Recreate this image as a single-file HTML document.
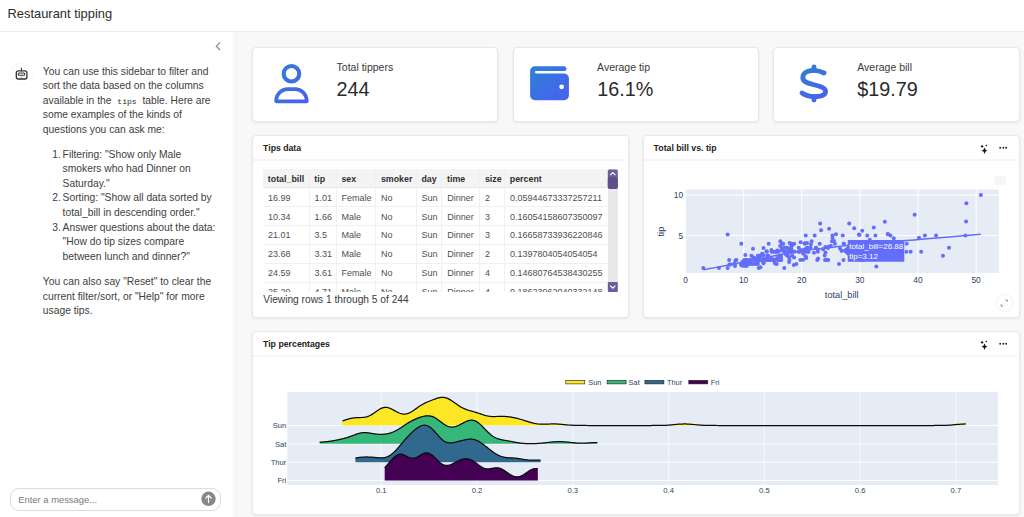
<!DOCTYPE html>
<html><head><meta charset="utf-8"><title>Restaurant tipping</title>
<style>
html,body{margin:0;padding:0}
body{width:1024px;height:517px;overflow:hidden;position:relative;background:#f8f8f8;font-family:'Liberation Sans', sans-serif}
.t{position:absolute;white-space:nowrap}
</style></head><body>
<div style="position:absolute;left:0px;top:0px;width:1024px;height:31px;background:#fff;border-bottom:1px solid #ededed"></div><div style="position:absolute;left:0px;top:32px;width:232px;height:485px;background:#fff"></div><div style="position:absolute;left:232px;top:32px;width:6px;height:485px;background:linear-gradient(to right,#fefefe,#f5f5f5 60%,#f8f8f8)"></div><div class="t" style="left:7.50px;top:8.08px;font-size:12.9px;line-height:12.9px;color:#2b2b2b;font-weight:normal;">Restaurant tipping</div><svg style="position:absolute;left:212px;top:40px" width="14" height="12" viewBox="0 0 14 12"><path d="M8 2.4 L4.3 6.2 L8 10" fill="none" stroke="#8c8c8c" stroke-width="1.25"/></svg><svg style="position:absolute;left:10px;top:62px" width="24" height="24" viewBox="0 0 24 24">
<circle cx="11.5" cy="12" r="11" fill="none" stroke="#f8f8f8" stroke-width="1"/>
<line x1="11.4" y1="6" x2="11.4" y2="8.7" stroke="#333" stroke-width="1.1" stroke-linecap="round"/>
<rect x="6.3" y="8.8" width="10.6" height="8.2" rx="2" fill="none" stroke="#333" stroke-width="1.3"/>
<rect x="8.2" y="11" width="6.6" height="2.3" rx="1.15" fill="none" stroke="#333" stroke-width="1.1"/>
<line x1="10.4" y1="15.2" x2="12.4" y2="15.2" stroke="#777" stroke-width="0.6"/>
</svg><div class="t" style="left:42.80px;top:66.58px;font-size:10.3px;line-height:10.3px;color:#404040;font-weight:normal;">You can use this sidebar to filter and</div><div class="t" style="left:42.80px;top:81.18px;font-size:10.3px;line-height:10.3px;color:#404040;font-weight:normal;">sort the data based on the columns</div><div class="t" style="left:42.80px;top:95.78px;font-size:10.3px;line-height:10.3px;color:#404040;font-weight:normal;">available in the <span style="font-family:'Liberation Mono',monospace;font-size:8px;padding:1px 3px;color:#2a2a2a">tips</span> table. Here are</div><div class="t" style="left:42.80px;top:110.38px;font-size:10.3px;line-height:10.3px;color:#404040;font-weight:normal;">some examples of the kinds of</div><div class="t" style="left:42.80px;top:124.68px;font-size:10.3px;line-height:10.3px;color:#404040;font-weight:normal;">questions you can ask me:</div><div class="t" style="left:62.60px;top:149.98px;font-size:10.3px;line-height:10.3px;color:#404040;font-weight:normal;">Filtering: &quot;Show only Male</div><div class="t" style="left:62.60px;top:164.28px;font-size:10.3px;line-height:10.3px;color:#404040;font-weight:normal;">smokers who had Dinner on</div><div class="t" style="left:62.60px;top:178.78px;font-size:10.3px;line-height:10.3px;color:#404040;font-weight:normal;">Saturday.&quot;</div><div class="t" style="left:62.60px;top:193.38px;font-size:10.3px;line-height:10.3px;color:#404040;font-weight:normal;">Sorting: &quot;Show all data sorted by</div><div class="t" style="left:62.60px;top:207.98px;font-size:10.3px;line-height:10.3px;color:#404040;font-weight:normal;">total_bill in descending order.&quot;</div><div class="t" style="left:62.60px;top:222.58px;font-size:10.3px;line-height:10.3px;color:#404040;font-weight:normal;">Answer questions about the data:</div><div class="t" style="left:62.60px;top:237.18px;font-size:10.3px;line-height:10.3px;color:#404040;font-weight:normal;">&quot;How do tip sizes compare</div><div class="t" style="left:62.60px;top:251.98px;font-size:10.3px;line-height:10.3px;color:#404040;font-weight:normal;">between lunch and dinner?&quot;</div><div class="t" style="left:42.80px;top:276.98px;font-size:10.3px;line-height:10.3px;color:#404040;font-weight:normal;">You can also say &quot;Reset&quot; to clear the</div><div class="t" style="left:42.80px;top:291.58px;font-size:10.3px;line-height:10.3px;color:#404040;font-weight:normal;">current filter/sort, or &quot;Help&quot; for more</div><div class="t" style="left:42.80px;top:306.08px;font-size:10.3px;line-height:10.3px;color:#404040;font-weight:normal;">usage tips.</div><div class="t" style="left:52.30px;top:149.98px;font-size:10.3px;line-height:10.3px;color:#404040;font-weight:normal;">1.</div><div class="t" style="left:52.30px;top:193.38px;font-size:10.3px;line-height:10.3px;color:#404040;font-weight:normal;">2.</div><div class="t" style="left:52.30px;top:222.58px;font-size:10.3px;line-height:10.3px;color:#404040;font-weight:normal;">3.</div><div style="position:absolute;left:10px;top:488px;width:209px;height:21px;background:#fff;border:1px solid #dcdcdc;border-radius:9px"></div><div class="t" style="left:18.30px;top:495.04px;font-size:9.4px;line-height:9.4px;color:#7a7a7a;font-weight:normal;">Enter a message...</div><svg style="position:absolute;left:200px;top:491px" width="17" height="17" viewBox="0 0 17 17"><circle cx="8.5" cy="7.8" r="7.2" fill="#878787"/><path d="M8.5 11.6 V4.4 M5.9 7 L8.5 4.4 L11.1 7" fill="none" stroke="#fff" stroke-width="1.2" stroke-linecap="round" stroke-linejoin="round"/></svg><div style="position:absolute;left:252px;top:46.5px;width:244px;height:73.6px;background:#fff;border:1px solid #e8e8e8;border-radius:4px;box-shadow:0 1px 3px rgba(0,0,0,0.08)"></div><div style="position:absolute;left:512.5px;top:46.5px;width:244px;height:73.6px;background:#fff;border:1px solid #e8e8e8;border-radius:4px;box-shadow:0 1px 3px rgba(0,0,0,0.08)"></div><div style="position:absolute;left:773px;top:46.5px;width:245px;height:73.6px;background:#fff;border:1px solid #e8e8e8;border-radius:4px;box-shadow:0 1px 3px rgba(0,0,0,0.08)"></div><div style="position:absolute;left:252px;top:134.8px;width:375px;height:181.4px;background:#fff;border:1px solid #e8e8e8;border-radius:4px;box-shadow:0 1px 3px rgba(0,0,0,0.08)"></div><div style="position:absolute;left:642.8px;top:134.8px;width:375px;height:181.4px;background:#fff;border:1px solid #e8e8e8;border-radius:4px;box-shadow:0 1px 3px rgba(0,0,0,0.08)"></div><div style="position:absolute;left:252px;top:330.5px;width:766px;height:182px;background:#fff;border:1px solid #e8e8e8;border-radius:4px;box-shadow:0 1px 3px rgba(0,0,0,0.08)"></div><div class="t" style="left:336.60px;top:62.01px;font-size:10.5px;line-height:10.5px;color:#3a3a3a;font-weight:normal;">Total tippers</div><div class="t" style="left:336.40px;top:79.84px;font-size:19.8px;line-height:19.8px;color:#2a2a2a;font-weight:normal;">244</div><div class="t" style="left:597.10px;top:62.01px;font-size:10.5px;line-height:10.5px;color:#3a3a3a;font-weight:normal;">Average tip</div><div class="t" style="left:597.30px;top:79.84px;font-size:19.8px;line-height:19.8px;color:#2a2a2a;font-weight:normal;">16.1%</div><div class="t" style="left:857.30px;top:62.01px;font-size:10.5px;line-height:10.5px;color:#3a3a3a;font-weight:normal;">Average bill</div><div class="t" style="left:857.30px;top:79.84px;font-size:19.8px;line-height:19.8px;color:#2a2a2a;font-weight:normal;">$19.79</div><svg style="position:absolute;left:0;top:0" width="1024" height="130" viewBox="0 0 1024 130">
<defs>
<linearGradient id="g1" x1="0" y1="0" x2="1" y2="1"><stop offset="0" stop-color="#2f80d0"/><stop offset="1" stop-color="#4d5cf2"/></linearGradient>
<linearGradient id="g2" x1="0" y1="0" x2="1" y2="1"><stop offset="0" stop-color="#2b82d3"/><stop offset="1" stop-color="#4b5ff3"/></linearGradient>
</defs>
<g transform="translate(274.3,64) scale(0.0766)" fill="url(#g1)">
<path d="M299 128a75 75 0 1 0 -150 0 75 75 0 1 0 150 0zM96 128a128 128 0 1 1 256 0A128 128 0 1 1 96 128zM49.3 464H398.7c-8.9-63.3-63.3-112-129-112H178.3c-65.7 0-120.1 48.7-129 112zM0 482.3C0 383.8 79.8 304 178.3 304h91.4C368.2 304 448 383.8 448 482.3c0 16.4-13.3 29.7-29.7 29.7H29.7C13.3 512 0 498.7 0 482.3z"/>
</g>
<g transform="translate(530.1,63.8) scale(0.0758)" fill="url(#g2)">
<path d="M64 32C28.7 32 0 60.7 0 96V416c0 35.3 28.7 64 64 64H448c35.3 0 64-28.7 64-64V192c0-35.3-28.7-64-64-64H80c-8.8 0-16-7.2-16-16s7.2-16 16-16H448c17.7 0 32-14.3 32-32s-14.3-32-32-32H64zM416 272a32 32 0 1 1 0 64 32 32 0 1 1 0-64z"/>
</g>
<linearGradient id="g3" gradientUnits="userSpaceOnUse" x1="800" y1="64" x2="828" y2="102"><stop offset="0" stop-color="#2f80d0"/><stop offset="1" stop-color="#4d5cf2"/></linearGradient>
<g fill="none" stroke="url(#g3)" stroke-width="4.8" stroke-linecap="round">
<path d="M824 73 C819.5 70.8 815.5 70.3 811.8 70.5 C805.8 70.9 802.8 74 802.8 77.6 C802.8 81.6 806.6 83 813 84.5 C820.5 86.3 825.6 88 825.6 91.2 C825.6 95 820.5 96.6 814 96.6 C809 96.6 805 95.2 802 93"/>
<path d="M814 66.8 V70.4 M814 96.6 V100.1"/>
</g>
</svg><div class="t" style="left:263.10px;top:144.24px;font-size:8.7px;line-height:8.7px;color:#222;font-weight:bold;">Tips data</div><div style="position:absolute;left:253px;top:158.5px;width:373px;height:2px;background:#f5f5f5"></div><div style="position:absolute;left:262.8px;top:169.0px;width:355px;height:122.89999999999998px;overflow:hidden"><div style="position:absolute;left:0px;top:0px;width:344.90000000000003px;height:19.4px;background:#f4f4f4"></div><div style="position:absolute;left:0px;top:37.3px;width:344.90000000000003px;height:1px;background:#f0f0f0"></div><div style="position:absolute;left:0px;top:56.199999999999996px;width:344.90000000000003px;height:1px;background:#f0f0f0"></div><div style="position:absolute;left:0px;top:75.1px;width:344.90000000000003px;height:1px;background:#f0f0f0"></div><div style="position:absolute;left:0px;top:94.0px;width:344.90000000000003px;height:1px;background:#f0f0f0"></div><div style="position:absolute;left:0px;top:112.9px;width:344.90000000000003px;height:1px;background:#f0f0f0"></div><div style="position:absolute;left:0px;top:131.79999999999998px;width:344.90000000000003px;height:1px;background:#f0f0f0"></div><div style="position:absolute;left:0px;top:150.7px;width:344.90000000000003px;height:1px;background:#f0f0f0"></div><div style="position:absolute;left:0px;top:18.4px;width:344.90000000000003px;height:1px;background:#e6e6e6"></div><div style="position:absolute;left:46.0px;top:0px;width:1px;height:200px;background:#f0f0f0"></div><div style="position:absolute;left:73.09999999999997px;top:0px;width:1px;height:200px;background:#f0f0f0"></div><div style="position:absolute;left:112.59999999999997px;top:0px;width:1px;height:200px;background:#f0f0f0"></div><div style="position:absolute;left:153.09999999999997px;top:0px;width:1px;height:200px;background:#f0f0f0"></div><div style="position:absolute;left:178.7px;top:0px;width:1px;height:200px;background:#f0f0f0"></div><div style="position:absolute;left:216.59999999999997px;top:0px;width:1px;height:200px;background:#f0f0f0"></div><div style="position:absolute;left:241.5px;top:0px;width:1px;height:200px;background:#f0f0f0"></div><div class="t" style="left:5.00px;top:5.71px;font-size:8.85px;line-height:8.85px;color:#2e2e2e;font-weight:bold;">total_bill</div><div class="t" style="left:51.50px;top:5.71px;font-size:8.85px;line-height:8.85px;color:#2e2e2e;font-weight:bold;">tip</div><div class="t" style="left:78.60px;top:5.71px;font-size:8.85px;line-height:8.85px;color:#2e2e2e;font-weight:bold;">sex</div><div class="t" style="left:118.10px;top:5.71px;font-size:8.85px;line-height:8.85px;color:#2e2e2e;font-weight:bold;">smoker</div><div class="t" style="left:158.60px;top:5.71px;font-size:8.85px;line-height:8.85px;color:#2e2e2e;font-weight:bold;">day</div><div class="t" style="left:184.20px;top:5.71px;font-size:8.85px;line-height:8.85px;color:#2e2e2e;font-weight:bold;">time</div><div class="t" style="left:222.10px;top:5.71px;font-size:8.85px;line-height:8.85px;color:#2e2e2e;font-weight:bold;">size</div><div class="t" style="left:247.00px;top:5.71px;font-size:8.85px;line-height:8.85px;color:#2e2e2e;font-weight:bold;">percent</div><div class="t" style="left:5.20px;top:24.68px;font-size:9.0px;line-height:9.0px;color:#4f4f4f;font-weight:normal;">16.99</div><div class="t" style="left:51.70px;top:24.68px;font-size:9.0px;line-height:9.0px;color:#4f4f4f;font-weight:normal;">1.01</div><div class="t" style="left:78.80px;top:24.68px;font-size:9.0px;line-height:9.0px;color:#4f4f4f;font-weight:normal;">Female</div><div class="t" style="left:118.30px;top:24.68px;font-size:9.0px;line-height:9.0px;color:#4f4f4f;font-weight:normal;">No</div><div class="t" style="left:158.80px;top:24.68px;font-size:9.0px;line-height:9.0px;color:#4f4f4f;font-weight:normal;">Sun</div><div class="t" style="left:184.40px;top:24.68px;font-size:9.0px;line-height:9.0px;color:#4f4f4f;font-weight:normal;">Dinner</div><div class="t" style="left:222.30px;top:24.68px;font-size:9.0px;line-height:9.0px;color:#4f4f4f;font-weight:normal;">2</div><div class="t" style="left:247.20px;top:24.68px;font-size:9.0px;line-height:9.0px;color:#4f4f4f;font-weight:normal;">0.05944673337257211</div><div class="t" style="left:5.20px;top:43.58px;font-size:9.0px;line-height:9.0px;color:#4f4f4f;font-weight:normal;">10.34</div><div class="t" style="left:51.70px;top:43.58px;font-size:9.0px;line-height:9.0px;color:#4f4f4f;font-weight:normal;">1.66</div><div class="t" style="left:78.80px;top:43.58px;font-size:9.0px;line-height:9.0px;color:#4f4f4f;font-weight:normal;">Male</div><div class="t" style="left:118.30px;top:43.58px;font-size:9.0px;line-height:9.0px;color:#4f4f4f;font-weight:normal;">No</div><div class="t" style="left:158.80px;top:43.58px;font-size:9.0px;line-height:9.0px;color:#4f4f4f;font-weight:normal;">Sun</div><div class="t" style="left:184.40px;top:43.58px;font-size:9.0px;line-height:9.0px;color:#4f4f4f;font-weight:normal;">Dinner</div><div class="t" style="left:222.30px;top:43.58px;font-size:9.0px;line-height:9.0px;color:#4f4f4f;font-weight:normal;">3</div><div class="t" style="left:247.20px;top:43.58px;font-size:9.0px;line-height:9.0px;color:#4f4f4f;font-weight:normal;">0.16054158607350097</div><div class="t" style="left:5.20px;top:62.48px;font-size:9.0px;line-height:9.0px;color:#4f4f4f;font-weight:normal;">21.01</div><div class="t" style="left:51.70px;top:62.48px;font-size:9.0px;line-height:9.0px;color:#4f4f4f;font-weight:normal;">3.5</div><div class="t" style="left:78.80px;top:62.48px;font-size:9.0px;line-height:9.0px;color:#4f4f4f;font-weight:normal;">Male</div><div class="t" style="left:118.30px;top:62.48px;font-size:9.0px;line-height:9.0px;color:#4f4f4f;font-weight:normal;">No</div><div class="t" style="left:158.80px;top:62.48px;font-size:9.0px;line-height:9.0px;color:#4f4f4f;font-weight:normal;">Sun</div><div class="t" style="left:184.40px;top:62.48px;font-size:9.0px;line-height:9.0px;color:#4f4f4f;font-weight:normal;">Dinner</div><div class="t" style="left:222.30px;top:62.48px;font-size:9.0px;line-height:9.0px;color:#4f4f4f;font-weight:normal;">3</div><div class="t" style="left:247.20px;top:62.48px;font-size:9.0px;line-height:9.0px;color:#4f4f4f;font-weight:normal;">0.16658733936220846</div><div class="t" style="left:5.20px;top:81.38px;font-size:9.0px;line-height:9.0px;color:#4f4f4f;font-weight:normal;">23.68</div><div class="t" style="left:51.70px;top:81.38px;font-size:9.0px;line-height:9.0px;color:#4f4f4f;font-weight:normal;">3.31</div><div class="t" style="left:78.80px;top:81.38px;font-size:9.0px;line-height:9.0px;color:#4f4f4f;font-weight:normal;">Male</div><div class="t" style="left:118.30px;top:81.38px;font-size:9.0px;line-height:9.0px;color:#4f4f4f;font-weight:normal;">No</div><div class="t" style="left:158.80px;top:81.38px;font-size:9.0px;line-height:9.0px;color:#4f4f4f;font-weight:normal;">Sun</div><div class="t" style="left:184.40px;top:81.38px;font-size:9.0px;line-height:9.0px;color:#4f4f4f;font-weight:normal;">Dinner</div><div class="t" style="left:222.30px;top:81.38px;font-size:9.0px;line-height:9.0px;color:#4f4f4f;font-weight:normal;">2</div><div class="t" style="left:247.20px;top:81.38px;font-size:9.0px;line-height:9.0px;color:#4f4f4f;font-weight:normal;">0.1397804054054054</div><div class="t" style="left:5.20px;top:100.28px;font-size:9.0px;line-height:9.0px;color:#4f4f4f;font-weight:normal;">24.59</div><div class="t" style="left:51.70px;top:100.28px;font-size:9.0px;line-height:9.0px;color:#4f4f4f;font-weight:normal;">3.61</div><div class="t" style="left:78.80px;top:100.28px;font-size:9.0px;line-height:9.0px;color:#4f4f4f;font-weight:normal;">Female</div><div class="t" style="left:118.30px;top:100.28px;font-size:9.0px;line-height:9.0px;color:#4f4f4f;font-weight:normal;">No</div><div class="t" style="left:158.80px;top:100.28px;font-size:9.0px;line-height:9.0px;color:#4f4f4f;font-weight:normal;">Sun</div><div class="t" style="left:184.40px;top:100.28px;font-size:9.0px;line-height:9.0px;color:#4f4f4f;font-weight:normal;">Dinner</div><div class="t" style="left:222.30px;top:100.28px;font-size:9.0px;line-height:9.0px;color:#4f4f4f;font-weight:normal;">4</div><div class="t" style="left:247.20px;top:100.28px;font-size:9.0px;line-height:9.0px;color:#4f4f4f;font-weight:normal;">0.14680764538430255</div><div class="t" style="left:5.20px;top:119.18px;font-size:9.0px;line-height:9.0px;color:#4f4f4f;font-weight:normal;">25.29</div><div class="t" style="left:51.70px;top:119.18px;font-size:9.0px;line-height:9.0px;color:#4f4f4f;font-weight:normal;">4.71</div><div class="t" style="left:78.80px;top:119.18px;font-size:9.0px;line-height:9.0px;color:#4f4f4f;font-weight:normal;">Male</div><div class="t" style="left:118.30px;top:119.18px;font-size:9.0px;line-height:9.0px;color:#4f4f4f;font-weight:normal;">No</div><div class="t" style="left:158.80px;top:119.18px;font-size:9.0px;line-height:9.0px;color:#4f4f4f;font-weight:normal;">Sun</div><div class="t" style="left:184.40px;top:119.18px;font-size:9.0px;line-height:9.0px;color:#4f4f4f;font-weight:normal;">Dinner</div><div class="t" style="left:222.30px;top:119.18px;font-size:9.0px;line-height:9.0px;color:#4f4f4f;font-weight:normal;">4</div><div class="t" style="left:247.20px;top:119.18px;font-size:9.0px;line-height:9.0px;color:#4f4f4f;font-weight:normal;">0.18623962040332148</div><div style="position:absolute;left:344.90000000000003px;top:0px;width:10px;height:130px;background:#e8e8e8"></div></div><svg style="position:absolute;left:607px;top:169px" width="12" height="124" viewBox="0 0 12 124">
<rect x="0.8" y="0.6" width="10" height="19" rx="1.5" fill="#6e5d9e"/>
<rect x="0.8" y="8" width="10" height="12" rx="2.5" fill="#5f4f8d"/>
<path d="M3.2 6.2 L5.8 3.6 L8.4 6.2" fill="none" stroke="#fff" stroke-width="1.1"/>
<rect x="0.8" y="113" width="10" height="10" rx="1" fill="#6e5d9e"/>
<path d="M3.2 116.6 L5.8 119.2 L8.4 116.6" fill="none" stroke="#fff" stroke-width="1.1"/>
</svg><div class="t" style="left:263.30px;top:295.27px;font-size:10.2px;line-height:10.2px;color:#3a3a3a;font-weight:normal;">Viewing rows 1 through 5 of 244</div><svg style="position:absolute;left:976.0px;top:142.0px" width="32" height="16" viewBox="0 0 32 16">
<path d="M8.5 4.2 Q9 6.9 11.6 7.3 Q9 7.8 8.5 10.6 Q8 7.8 5.4 7.3 Q8 6.9 8.5 4.2Z" transform="translate(0,1.3)" fill="#111"/>
<path d="M6.1 2.6 Q6.4 4.1 7.8 4.4 Q6.4 4.7 6.1 6.2 Q5.8 4.7 4.4 4.4 Q5.8 4.1 6.1 2.6Z" transform="translate(0,0)" fill="#111"/>
<path d="M10.2 2.3 Q10.4 3.2 11.2 3.4 Q10.4 3.6 10.2 4.5 Q10 3.6 9.2 3.4 Q10 3.2 10.2 2.3Z" transform="translate(0,0)" fill="#111"/>
<circle cx="24.2" cy="5.8" r="0.95" fill="#222"/><circle cx="27.3" cy="5.8" r="0.95" fill="#222"/><circle cx="30.1" cy="5.8" r="0.95" fill="#222"/>
</svg><div class="t" style="left:653.60px;top:144.29px;font-size:8.75px;line-height:8.75px;color:#222;font-weight:bold;">Total bill vs. tip</div><div style="position:absolute;left:643.8px;top:158.5px;width:373px;height:2px;background:#f5f5f5"></div><div class="t" style="left:263.00px;top:340.19px;font-size:8.75px;line-height:8.75px;color:#222;font-weight:bold;">Tip percentages</div><div style="position:absolute;left:253px;top:354.5px;width:764px;height:2px;background:#f5f5f5"></div><svg style="position:absolute;left:976.0px;top:338.0px" width="32" height="16" viewBox="0 0 32 16">
<path d="M8.5 4.2 Q9 6.9 11.6 7.3 Q9 7.8 8.5 10.6 Q8 7.8 5.4 7.3 Q8 6.9 8.5 4.2Z" transform="translate(0,1.3)" fill="#111"/>
<path d="M6.1 2.6 Q6.4 4.1 7.8 4.4 Q6.4 4.7 6.1 6.2 Q5.8 4.7 4.4 4.4 Q5.8 4.1 6.1 2.6Z" transform="translate(0,0)" fill="#111"/>
<path d="M10.2 2.3 Q10.4 3.2 11.2 3.4 Q10.4 3.6 10.2 4.5 Q10 3.6 9.2 3.4 Q10 3.2 10.2 2.3Z" transform="translate(0,0)" fill="#111"/>
<circle cx="24.2" cy="5.8" r="0.95" fill="#222"/><circle cx="27.3" cy="5.8" r="0.95" fill="#222"/><circle cx="30.1" cy="5.8" r="0.95" fill="#222"/>
</svg><svg style="position:absolute;left:0;top:0;font-family:'Liberation Sans', sans-serif" width="1024" height="517" viewBox="0 0 1024 517"><rect x="686.0" y="189.5" width="312.80" height="83.50" fill="#e5ecf6"/><line x1="743.62" y1="189.5" x2="743.62" y2="273.0" stroke="#fff" stroke-width="1"/><line x1="801.74" y1="189.5" x2="801.74" y2="273.0" stroke="#fff" stroke-width="1"/><line x1="859.86" y1="189.5" x2="859.86" y2="273.0" stroke="#fff" stroke-width="1"/><line x1="917.98" y1="189.5" x2="917.98" y2="273.0" stroke="#fff" stroke-width="1"/><line x1="976.10" y1="189.5" x2="976.10" y2="273.0" stroke="#fff" stroke-width="1"/><line x1="686.0" y1="235.60" x2="998.8" y2="235.60" stroke="#fff" stroke-width="1"/><line x1="686.0" y1="195.10" x2="998.8" y2="195.10" stroke="#fff" stroke-width="1"/><text x="685.50" y="283.2" text-anchor="middle" font-size="8.4" fill="#2a3f5f">0</text><text x="743.62" y="283.2" text-anchor="middle" font-size="8.4" fill="#2a3f5f">10</text><text x="801.74" y="283.2" text-anchor="middle" font-size="8.4" fill="#2a3f5f">20</text><text x="859.86" y="283.2" text-anchor="middle" font-size="8.4" fill="#2a3f5f">30</text><text x="917.98" y="283.2" text-anchor="middle" font-size="8.4" fill="#2a3f5f">40</text><text x="976.10" y="283.2" text-anchor="middle" font-size="8.4" fill="#2a3f5f">50</text><text x="683.2" y="238.60" text-anchor="end" font-size="8.4" fill="#2a3f5f">5</text><text x="683.2" y="198.10" text-anchor="end" font-size="8.4" fill="#2a3f5f">10</text><text x="841.7" y="298.0" text-anchor="middle" font-size="9.2" fill="#2a3f5f">total_bill</text><text transform="translate(664.4,231.6) rotate(-90)" text-anchor="middle" font-size="9.2" fill="#2a3f5f">tip</text><g fill="#636efa"><circle cx="784.25" cy="267.92" r="2.0"/><circle cx="745.60" cy="262.65" r="2.0"/><circle cx="807.61" cy="247.75" r="2.0"/><circle cx="823.13" cy="249.29" r="2.0"/><circle cx="828.42" cy="246.86" r="2.0"/><circle cx="832.49" cy="237.95" r="2.0"/><circle cx="736.47" cy="259.90" r="2.0"/><circle cx="841.73" cy="250.83" r="2.0"/><circle cx="772.91" cy="260.22" r="2.0"/><circle cx="771.40" cy="249.94" r="2.0"/><circle cx="745.19" cy="262.25" r="2.0"/><circle cx="890.43" cy="235.60" r="2.0"/><circle cx="775.12" cy="263.38" r="2.0"/><circle cx="792.62" cy="251.80" r="2.0"/><circle cx="771.69" cy="251.64" r="2.0"/><circle cx="810.92" cy="244.35" r="2.0"/><circle cx="745.54" cy="262.57" r="2.0"/><circle cx="780.18" cy="246.05" r="2.0"/><circle cx="784.13" cy="247.75" r="2.0"/><circle cx="805.52" cy="248.97" r="2.0"/><circle cx="789.65" cy="243.05" r="2.0"/><circle cx="803.43" cy="253.83" r="2.0"/><circle cx="777.16" cy="258.04" r="2.0"/><circle cx="914.61" cy="214.70" r="2.0"/><circle cx="800.69" cy="250.34" r="2.0"/><circle cx="789.01" cy="257.15" r="2.0"/><circle cx="763.21" cy="259.90" r="2.0"/><circle cx="759.25" cy="259.90" r="2.0"/><circle cx="811.62" cy="241.27" r="2.0"/><circle cx="799.71" cy="251.80" r="2.0"/><circle cx="741.00" cy="264.36" r="2.0"/><circle cx="792.15" cy="255.85" r="2.0"/><circle cx="773.03" cy="251.80" r="2.0"/><circle cx="805.75" cy="256.25" r="2.0"/><circle cx="788.84" cy="249.61" r="2.0"/><circle cx="825.34" cy="246.94" r="2.0"/><circle cx="780.29" cy="259.90" r="2.0"/><circle cx="783.90" cy="251.23" r="2.0"/><circle cx="794.13" cy="257.39" r="2.0"/><circle cx="867.24" cy="235.60" r="2.0"/><circle cx="778.72" cy="257.96" r="2.0"/><circle cx="786.98" cy="255.53" r="2.0"/><circle cx="766.52" cy="251.31" r="2.0"/><circle cx="741.76" cy="265.41" r="2.0"/><circle cx="862.18" cy="230.74" r="2.0"/><circle cx="791.80" cy="251.80" r="2.0"/><circle cx="814.70" cy="235.60" r="2.0"/><circle cx="873.81" cy="227.50" r="2.0"/><circle cx="851.43" cy="259.50" r="2.0"/><circle cx="790.35" cy="251.80" r="2.0"/><circle cx="758.38" cy="255.85" r="2.0"/><circle cx="745.31" cy="255.04" r="2.0"/><circle cx="887.82" cy="233.98" r="2.0"/><circle cx="743.27" cy="263.46" r="2.0"/><circle cx="834.05" cy="240.95" r="2.0"/><circle cx="798.78" cy="247.67" r="2.0"/><circle cx="906.41" cy="251.80" r="2.0"/><circle cx="838.99" cy="263.95" r="2.0"/><circle cx="750.83" cy="261.84" r="2.0"/><circle cx="966.05" cy="221.59" r="2.0"/><circle cx="803.43" cy="250.10" r="2.0"/><circle cx="765.76" cy="259.90" r="2.0"/><circle cx="749.55" cy="260.06" r="2.0"/><circle cx="791.80" cy="245.64" r="2.0"/><circle cx="787.73" cy="254.72" r="2.0"/><circle cx="802.20" cy="250.59" r="2.0"/><circle cx="781.11" cy="256.09" r="2.0"/><circle cx="703.34" cy="268.00" r="2.0"/><circle cx="803.08" cy="259.82" r="2.0"/><circle cx="772.74" cy="259.17" r="2.0"/><circle cx="755.36" cy="260.14" r="2.0"/><circle cx="784.71" cy="251.80" r="2.0"/><circle cx="841.61" cy="250.67" r="2.0"/><circle cx="832.43" cy="235.60" r="2.0"/><circle cx="771.11" cy="258.28" r="2.0"/><circle cx="746.58" cy="265.98" r="2.0"/><circle cx="789.65" cy="251.15" r="2.0"/><circle cx="843.59" cy="243.70" r="2.0"/><circle cx="817.78" cy="251.80" r="2.0"/><circle cx="785.99" cy="254.15" r="2.0"/><circle cx="798.49" cy="251.80" r="2.0"/><circle cx="782.33" cy="248.56" r="2.0"/><circle cx="744.03" cy="261.28" r="2.0"/><circle cx="875.44" cy="235.60" r="2.0"/><circle cx="778.38" cy="259.66" r="2.0"/><circle cx="887.93" cy="234.22" r="2.0"/><circle cx="761.23" cy="259.90" r="2.0"/><circle cx="791.74" cy="243.70" r="2.0"/><circle cx="829.11" cy="228.72" r="2.0"/><circle cx="808.48" cy="251.80" r="2.0"/><circle cx="853.87" cy="251.80" r="2.0"/><circle cx="816.21" cy="247.75" r="2.0"/><circle cx="718.92" cy="268.00" r="2.0"/><circle cx="780.35" cy="241.27" r="2.0"/><circle cx="817.72" cy="249.78" r="2.0"/><circle cx="918.97" cy="237.79" r="2.0"/><circle cx="844.05" cy="243.70" r="2.0"/><circle cx="755.42" cy="263.95" r="2.0"/><circle cx="807.61" cy="251.80" r="2.0"/><circle cx="757.92" cy="263.95" r="2.0"/><circle cx="751.47" cy="255.85" r="2.0"/><circle cx="774.89" cy="251.80" r="2.0"/><circle cx="942.97" cy="255.85" r="2.0"/><circle cx="815.81" cy="247.91" r="2.0"/><circle cx="807.09" cy="243.05" r="2.0"/><circle cx="774.77" cy="262.82" r="2.0"/><circle cx="804.59" cy="243.21" r="2.0"/><circle cx="832.02" cy="241.35" r="2.0"/><circle cx="791.51" cy="245.64" r="2.0"/><circle cx="768.67" cy="243.70" r="2.0"/><circle cx="766.87" cy="251.80" r="2.0"/><circle cx="727.64" cy="268.00" r="2.0"/><circle cx="906.76" cy="243.70" r="2.0"/><circle cx="824.70" cy="255.45" r="2.0"/><circle cx="834.93" cy="243.70" r="2.0"/><circle cx="786.11" cy="247.75" r="2.0"/><circle cx="859.45" cy="235.03" r="2.0"/><circle cx="747.40" cy="263.95" r="2.0"/><circle cx="757.74" cy="261.52" r="2.0"/><circle cx="825.45" cy="252.45" r="2.0"/><circle cx="753.44" cy="257.39" r="2.0"/><circle cx="763.50" cy="262.49" r="2.0"/><circle cx="768.38" cy="255.85" r="2.0"/><circle cx="778.20" cy="259.90" r="2.0"/><circle cx="758.03" cy="255.69" r="2.0"/><circle cx="858.70" cy="242.08" r="2.0"/><circle cx="735.02" cy="264.11" r="2.0"/><circle cx="769.89" cy="259.90" r="2.0"/><circle cx="751.64" cy="259.90" r="2.0"/><circle cx="818.13" cy="258.44" r="2.0"/><circle cx="796.39" cy="263.95" r="2.0"/><circle cx="803.31" cy="253.18" r="2.0"/><circle cx="750.42" cy="263.95" r="2.0"/><circle cx="756.76" cy="259.90" r="2.0"/><circle cx="791.63" cy="249.78" r="2.0"/><circle cx="734.96" cy="265.98" r="2.0"/><circle cx="745.54" cy="259.90" r="2.0"/><circle cx="767.74" cy="259.90" r="2.0"/><circle cx="778.49" cy="259.90" r="2.0"/><circle cx="761.99" cy="253.83" r="2.0"/><circle cx="787.04" cy="247.75" r="2.0"/><circle cx="884.85" cy="221.83" r="2.0"/><circle cx="924.90" cy="235.60" r="2.0"/><circle cx="842.71" cy="235.60" r="2.0"/><circle cx="780.99" cy="257.47" r="2.0"/><circle cx="734.03" cy="263.95" r="2.0"/><circle cx="793.84" cy="265.08" r="2.0"/><circle cx="754.49" cy="262.90" r="2.0"/><circle cx="742.34" cy="262.09" r="2.0"/><circle cx="729.15" cy="259.90" r="2.0"/><circle cx="767.27" cy="255.85" r="2.0"/><circle cx="761.81" cy="259.90" r="2.0"/><circle cx="785.82" cy="253.91" r="2.0"/><circle cx="828.18" cy="259.90" r="2.0"/><circle cx="800.40" cy="259.90" r="2.0"/><circle cx="858.99" cy="234.47" r="2.0"/><circle cx="965.46" cy="235.60" r="2.0"/><circle cx="830.80" cy="245.73" r="2.0"/><circle cx="763.32" cy="254.96" r="2.0"/><circle cx="781.34" cy="259.90" r="2.0"/><circle cx="810.46" cy="247.75" r="2.0"/><circle cx="759.08" cy="255.85" r="2.0"/><circle cx="779.71" cy="259.90" r="2.0"/><circle cx="765.76" cy="259.90" r="2.0"/><circle cx="787.27" cy="251.80" r="2.0"/><circle cx="828.01" cy="247.91" r="2.0"/><circle cx="806.16" cy="257.96" r="2.0"/><circle cx="869.80" cy="239.65" r="2.0"/><circle cx="747.05" cy="263.06" r="2.0"/><circle cx="747.28" cy="259.90" r="2.0"/><circle cx="980.81" cy="195.10" r="2.0"/><circle cx="777.39" cy="250.50" r="2.0"/><circle cx="727.64" cy="234.39" r="2.0"/><circle cx="870.61" cy="250.34" r="2.0"/><circle cx="783.26" cy="243.70" r="2.0"/><circle cx="876.71" cy="250.91" r="2.0"/><circle cx="789.48" cy="259.90" r="2.0"/><circle cx="769.66" cy="259.90" r="2.0"/><circle cx="741.30" cy="243.70" r="2.0"/><circle cx="886.77" cy="247.35" r="2.0"/><circle cx="886.89" cy="246.29" r="2.0"/><circle cx="821.09" cy="230.34" r="2.0"/><circle cx="949.07" cy="247.75" r="2.0"/><circle cx="820.16" cy="223.45" r="2.0"/><circle cx="921.18" cy="251.80" r="2.0"/><circle cx="805.75" cy="235.60" r="2.0"/><circle cx="806.97" cy="247.75" r="2.0"/><circle cx="862.53" cy="259.90" r="2.0"/><circle cx="790.99" cy="247.75" r="2.0"/><circle cx="819.76" cy="243.70" r="2.0"/><circle cx="776.69" cy="263.95" r="2.0"/><circle cx="800.64" cy="242.16" r="2.0"/><circle cx="850.79" cy="255.36" r="2.0"/><circle cx="775.47" cy="259.74" r="2.0"/><circle cx="781.86" cy="243.70" r="2.0"/><circle cx="729.44" cy="264.44" r="2.0"/><circle cx="745.60" cy="259.90" r="2.0"/><circle cx="936.06" cy="235.60" r="2.0"/><circle cx="761.06" cy="259.90" r="2.0"/><circle cx="764.02" cy="259.90" r="2.0"/><circle cx="794.24" cy="243.70" r="2.0"/><circle cx="759.54" cy="259.82" r="2.0"/><circle cx="761.06" cy="259.90" r="2.0"/><circle cx="780.82" cy="255.85" r="2.0"/><circle cx="804.82" cy="243.70" r="2.0"/><circle cx="781.22" cy="249.94" r="2.0"/><circle cx="840.04" cy="248.48" r="2.0"/><circle cx="910.60" cy="251.80" r="2.0"/><circle cx="826.56" cy="259.66" r="2.0"/><circle cx="759.66" cy="258.04" r="2.0"/><circle cx="860.21" cy="259.90" r="2.0"/><circle cx="835.97" cy="234.30" r="2.0"/><circle cx="966.39" cy="203.20" r="2.0"/><circle cx="762.63" cy="255.85" r="2.0"/><circle cx="849.22" cy="223.45" r="2.0"/><circle cx="760.47" cy="267.19" r="2.0"/><circle cx="849.11" cy="251.80" r="2.0"/><circle cx="752.86" cy="263.95" r="2.0"/><circle cx="730.48" cy="264.44" r="2.0"/><circle cx="860.67" cy="251.07" r="2.0"/><circle cx="756.17" cy="258.28" r="2.0"/><circle cx="763.50" cy="247.91" r="2.0"/><circle cx="735.37" cy="260.55" r="2.0"/><circle cx="778.38" cy="251.80" r="2.0"/><circle cx="763.50" cy="263.30" r="2.0"/><circle cx="780.06" cy="255.85" r="2.0"/><circle cx="744.14" cy="259.90" r="2.0"/><circle cx="804.36" cy="251.80" r="2.0"/><circle cx="762.68" cy="254.07" r="2.0"/><circle cx="814.06" cy="252.77" r="2.0"/><circle cx="825.05" cy="259.90" r="2.0"/><circle cx="776.69" cy="251.80" r="2.0"/><circle cx="752.98" cy="248.64" r="2.0"/><circle cx="748.10" cy="264.19" r="2.0"/><circle cx="775.76" cy="251.80" r="2.0"/><circle cx="744.03" cy="265.98" r="2.0"/><circle cx="758.73" cy="268.00" r="2.0"/><circle cx="876.31" cy="266.62" r="2.0"/><circle cx="893.74" cy="238.27" r="2.0"/><circle cx="854.22" cy="228.15" r="2.0"/><circle cx="843.47" cy="259.90" r="2.0"/><circle cx="817.26" cy="259.90" r="2.0"/><circle cx="789.07" cy="261.93" r="2.0"/><circle cx="794.65" cy="251.80" r="2.0"/></g><path d="M703.34,269.84 L718.92,266.88 L727.64,265.21 L729.15,264.92 L729.44,264.86 L730.48,264.66 L734.03,263.97 L734.96,263.79 L735.02,263.78 L735.37,263.71 L736.47,263.50 L741.00,262.61 L741.30,262.55 L741.76,262.46 L742.34,262.35 L743.27,262.17 L744.03,262.02 L744.14,261.99 L745.19,261.79 L745.31,261.76 L745.54,261.72 L745.60,261.71 L746.58,261.51 L747.05,261.42 L747.28,261.37 L747.40,261.35 L748.10,261.21 L749.55,260.92 L750.42,260.74 L750.83,260.66 L751.47,260.53 L751.64,260.50 L752.86,260.25 L752.98,260.22 L753.44,260.13 L754.49,259.92 L755.36,259.74 L755.42,259.72 L756.17,259.57 L756.76,259.45 L757.74,259.25 L757.92,259.21 L758.03,259.19 L758.38,259.11 L758.73,259.04 L759.08,258.97 L759.25,258.94 L759.54,258.88 L759.66,258.85 L760.47,258.69 L761.06,258.57 L761.23,258.53 L761.81,258.41 L761.99,258.38 L762.63,258.24 L762.68,258.23 L763.21,258.13 L763.32,258.10 L763.50,258.07 L764.02,257.95 L765.76,257.59 L766.52,257.43 L766.87,257.36 L767.27,257.27 L767.74,257.18 L768.38,257.04 L768.67,256.98 L769.66,256.77 L769.89,256.72 L771.11,256.46 L771.40,256.40 L771.69,256.34 L772.74,256.12 L772.91,256.08 L773.03,256.06 L774.77,255.68 L774.89,255.66 L775.12,255.61 L775.47,255.54 L775.76,255.48 L776.69,255.28 L777.16,255.18 L777.39,255.14 L778.20,254.96 L778.38,254.92 L778.49,254.90 L778.72,254.85 L779.71,254.64 L780.06,254.57 L780.18,254.55 L780.29,254.52 L780.35,254.51 L780.82,254.42 L780.99,254.38 L781.11,254.36 L781.22,254.33 L781.34,254.31 L781.86,254.20 L782.33,254.11 L783.26,253.93 L783.90,253.81 L784.13,253.76 L784.25,253.73 L784.71,253.64 L785.82,253.43 L785.99,253.39 L786.11,253.37 L786.98,253.21 L787.04,253.20 L787.27,253.16 L787.73,253.08 L788.84,252.88 L789.01,252.86 L789.07,252.85 L789.48,252.78 L789.65,252.75 L790.35,252.64 L790.99,252.53 L791.51,252.46 L791.63,252.44 L791.74,252.41 L791.80,252.40 L792.15,252.34 L792.62,252.27 L793.84,252.09 L794.13,252.05 L794.24,252.03 L794.65,251.98 L796.39,251.72 L798.49,251.39 L798.78,251.35 L799.71,251.20 L800.40,251.10 L800.64,251.07 L800.69,251.06 L802.20,250.84 L803.08,250.71 L803.31,250.68 L803.43,250.66 L804.36,250.52 L804.59,250.49 L804.82,250.45 L805.52,250.36 L805.75,250.33 L806.16,250.27 L806.97,250.16 L807.09,250.15 L807.61,250.08 L808.48,249.98 L810.46,249.74 L810.92,249.68 L811.62,249.60 L814.06,249.34 L814.70,249.27 L815.81,249.16 L816.21,249.11 L817.26,249.00 L817.72,248.95 L817.78,248.94 L818.13,248.91 L819.76,248.73 L820.16,248.68 L821.09,248.58 L823.13,248.35 L824.70,248.16 L825.05,248.12 L825.34,248.09 L825.45,248.07 L826.56,247.94 L828.01,247.77 L828.18,247.75 L828.42,247.72 L829.11,247.64 L830.80,247.44 L832.02,247.29 L832.43,247.24 L832.49,247.23 L834.05,247.03 L834.93,246.92 L835.97,246.78 L838.99,246.40 L840.04,246.26 L841.61,246.08 L841.73,246.06 L842.71,245.95 L843.47,245.86 L843.59,245.85 L844.05,245.80 L849.11,245.31 L849.22,245.30 L850.79,245.17 L851.43,245.12 L853.87,244.91 L854.22,244.89 L858.70,244.55 L858.99,244.53 L859.45,244.49 L860.21,244.42 L860.67,244.39 L862.18,244.27 L862.53,244.25 L867.24,243.91 L869.80,243.72 L870.61,243.66 L873.81,243.44 L875.44,243.32 L876.31,243.26 L876.71,243.23 L884.85,242.57 L886.77,242.40 L886.89,242.39 L887.82,242.31 L887.93,242.30 L890.43,242.08 L893.74,241.78 L906.41,240.62 L906.76,240.59 L910.60,240.24 L914.61,239.88 L918.97,239.49 L921.18,239.29 L924.90,238.97 L936.06,238.01 L942.97,237.42 L949.07,236.90 L965.46,235.54 L966.05,235.49 L966.39,235.46 L980.81,234.26" fill="none" stroke="#636efa" stroke-width="1.5"/><path d="M842.23,250.83 L847.73,245.83 V240.1 H904.3 V261.8 H847.73 V255.83 Z" fill="#636efa"/><text x="849.2" y="248.7" font-size="8.0" fill="#fff">total_bill=26.88</text><text x="849.2" y="259.1" font-size="8.0" fill="#fff">tip=3.12</text><rect x="994.7" y="175.5" width="11.3" height="9.7" fill="#f6f6f6" rx="1"/><circle cx="1004.7" cy="303" r="8.5" fill="#fff" stroke="#f0f0f0" stroke-width="1"/><path d="M1002.2 305.6 L1001.2 306.3 M1007.2 299.9 L1006.2 300.6 M1005.2 300 H1007.3 V302 M1001.1 304 V306.2 H1003.2" fill="none" stroke="#9a9a9a" stroke-width="0.9"/><rect x="287.3" y="392.2" width="710.70" height="92.80" fill="#e5ecf6"/><line x1="381.27" y1="392.2" x2="381.27" y2="485.0" stroke="#fff" stroke-opacity="0.6" stroke-width="1.2"/><text x="381.27" y="493.4" text-anchor="middle" font-size="7.6" fill="#2a3f5f">0.1</text><line x1="477.04" y1="392.2" x2="477.04" y2="485.0" stroke="#fff" stroke-opacity="0.6" stroke-width="1.2"/><text x="477.04" y="493.4" text-anchor="middle" font-size="7.6" fill="#2a3f5f">0.2</text><line x1="572.81" y1="392.2" x2="572.81" y2="485.0" stroke="#fff" stroke-opacity="0.6" stroke-width="1.2"/><text x="572.81" y="493.4" text-anchor="middle" font-size="7.6" fill="#2a3f5f">0.3</text><line x1="668.58" y1="392.2" x2="668.58" y2="485.0" stroke="#fff" stroke-opacity="0.6" stroke-width="1.2"/><text x="668.58" y="493.4" text-anchor="middle" font-size="7.6" fill="#2a3f5f">0.4</text><line x1="764.35" y1="392.2" x2="764.35" y2="485.0" stroke="#fff" stroke-opacity="0.6" stroke-width="1.2"/><text x="764.35" y="493.4" text-anchor="middle" font-size="7.6" fill="#2a3f5f">0.5</text><line x1="860.12" y1="392.2" x2="860.12" y2="485.0" stroke="#fff" stroke-opacity="0.6" stroke-width="1.2"/><text x="860.12" y="493.4" text-anchor="middle" font-size="7.6" fill="#2a3f5f">0.6</text><line x1="955.89" y1="392.2" x2="955.89" y2="485.0" stroke="#fff" stroke-opacity="0.6" stroke-width="1.2"/><text x="955.89" y="493.4" text-anchor="middle" font-size="7.6" fill="#2a3f5f">0.7</text><line x1="287.3" y1="425.50" x2="998.0" y2="425.50" stroke="#fff" stroke-width="1"/><text x="286.3" y="428.30" text-anchor="end" font-size="7.6" fill="#2a3f5f">Sun</text><line x1="287.3" y1="443.85" x2="998.0" y2="443.85" stroke="#fff" stroke-width="1"/><text x="286.3" y="446.65" text-anchor="end" font-size="7.6" fill="#2a3f5f">Sat</text><line x1="287.3" y1="462.20" x2="998.0" y2="462.20" stroke="#fff" stroke-width="1"/><text x="286.3" y="465.00" text-anchor="end" font-size="7.6" fill="#2a3f5f">Thur</text><line x1="287.3" y1="480.55" x2="998.0" y2="480.55" stroke="#fff" stroke-width="1"/><text x="286.3" y="483.35" text-anchor="end" font-size="7.6" fill="#2a3f5f">Fri</text><path d="M342.43,425.50 L342.43,420.98 L343.68,420.55 L344.93,420.12 L346.18,419.71 L347.43,419.32 L348.68,418.97 L349.93,418.64 L351.18,418.36 L352.43,418.13 L353.68,417.94 L354.92,417.79 L356.17,417.69 L357.42,417.62 L358.67,417.58 L359.92,417.54 L361.17,417.50 L362.42,417.44 L363.67,417.33 L364.92,417.15 L366.17,416.90 L367.42,416.56 L368.67,416.11 L369.92,415.55 L371.16,414.89 L372.41,414.14 L373.66,413.32 L374.91,412.44 L376.16,411.54 L377.41,410.66 L378.66,409.81 L379.91,409.05 L381.16,408.40 L382.41,407.89 L383.66,407.53 L384.91,407.35 L386.16,407.34 L387.40,407.49 L388.65,407.81 L389.90,408.25 L391.15,408.81 L392.40,409.45 L393.65,410.14 L394.90,410.85 L396.15,411.54 L397.40,412.19 L398.65,412.77 L399.90,413.26 L401.15,413.65 L402.40,413.91 L403.64,414.04 L404.89,414.03 L406.14,413.88 L407.39,413.59 L408.64,413.16 L409.89,412.62 L411.14,411.96 L412.39,411.21 L413.64,410.39 L414.89,409.52 L416.14,408.62 L417.39,407.72 L418.64,406.84 L419.88,405.99 L421.13,405.19 L422.38,404.44 L423.63,403.75 L424.88,403.11 L426.13,402.52 L427.38,401.98 L428.63,401.46 L429.88,400.96 L431.13,400.47 L432.38,399.99 L433.63,399.51 L434.88,399.04 L436.12,398.60 L437.37,398.19 L438.62,397.84 L439.87,397.56 L441.12,397.38 L442.37,397.30 L443.62,397.36 L444.87,397.54 L446.12,397.87 L447.37,398.32 L448.62,398.90 L449.87,399.58 L451.12,400.35 L452.36,401.19 L453.61,402.07 L454.86,402.97 L456.11,403.86 L457.36,404.74 L458.61,405.58 L459.86,406.37 L461.11,407.10 L462.36,407.77 L463.61,408.38 L464.86,408.93 L466.11,409.43 L467.36,409.87 L468.60,410.28 L469.85,410.66 L471.10,411.02 L472.35,411.37 L473.60,411.73 L474.85,412.09 L476.10,412.46 L477.35,412.86 L478.60,413.26 L479.85,413.68 L481.10,414.11 L482.35,414.52 L483.59,414.93 L484.84,415.30 L486.09,415.63 L487.34,415.92 L488.59,416.16 L489.84,416.33 L491.09,416.45 L492.34,416.52 L493.59,416.54 L494.84,416.53 L496.09,416.50 L497.34,416.45 L498.59,416.40 L499.83,416.37 L501.08,416.34 L502.33,416.35 L503.58,416.38 L504.83,416.44 L506.08,416.52 L507.33,416.64 L508.58,416.78 L509.83,416.95 L511.08,417.14 L512.33,417.36 L513.58,417.59 L514.83,417.85 L516.07,418.14 L517.32,418.44 L518.57,418.77 L519.82,419.12 L521.07,419.49 L522.32,419.87 L523.57,420.26 L524.82,420.66 L526.07,421.06 L527.32,421.46 L528.57,421.85 L529.82,422.22 L531.07,422.57 L532.31,422.89 L533.56,423.19 L534.81,423.45 L536.06,423.67 L537.31,423.85 L538.56,424.00 L539.81,424.10 L541.06,424.17 L542.31,424.21 L543.56,424.21 L544.81,424.19 L546.06,424.15 L547.31,424.11 L548.55,424.05 L549.80,424.00 L551.05,423.96 L552.30,423.93 L553.55,423.93 L554.80,423.94 L556.05,423.97 L557.30,424.03 L558.55,424.11 L559.80,424.20 L561.05,424.31 L562.30,424.43 L563.55,424.55 L564.79,424.67 L566.04,424.79 L567.29,424.90 L568.54,425.00 L569.79,425.09 L571.04,425.17 L572.29,425.24 L573.54,425.30 L574.79,425.35 L576.04,425.39 L577.29,425.42 L578.54,425.44 L579.79,425.46 L581.03,425.47 L582.28,425.48 L583.53,425.49 L584.78,425.49 L586.03,425.49 L587.28,425.50 L588.53,425.50 L589.78,425.50 L591.03,425.50 L592.28,425.50 L593.53,425.50 L594.78,425.50 L596.03,425.50 L597.27,425.50 L598.52,425.50 L599.77,425.50 L601.02,425.50 L602.27,425.50 L603.52,425.50 L604.77,425.50 L606.02,425.50 L607.27,425.50 L608.52,425.50 L609.77,425.50 L611.02,425.50 L612.27,425.50 L613.51,425.50 L614.76,425.50 L616.01,425.50 L617.26,425.50 L618.51,425.50 L619.76,425.50 L621.01,425.50 L622.26,425.50 L623.51,425.50 L624.76,425.50 L626.01,425.50 L627.26,425.50 L628.51,425.50 L629.75,425.50 L631.00,425.50 L632.25,425.50 L633.50,425.50 L634.75,425.50 L636.00,425.50 L637.25,425.50 L638.50,425.50 L639.75,425.50 L641.00,425.50 L642.25,425.50 L643.50,425.50 L644.75,425.50 L645.99,425.50 L647.24,425.50 L648.49,425.50 L649.74,425.50 L650.99,425.50 L652.24,425.49 L653.49,425.49 L654.74,425.49 L655.99,425.48 L657.24,425.47 L658.49,425.46 L659.74,425.45 L660.99,425.43 L662.23,425.40 L663.48,425.36 L664.73,425.32 L665.98,425.26 L667.23,425.20 L668.48,425.12 L669.73,425.04 L670.98,424.94 L672.23,424.83 L673.48,424.71 L674.73,424.59 L675.98,424.47 L677.23,424.35 L678.47,424.24 L679.72,424.15 L680.97,424.07 L682.22,424.01 L683.47,423.97 L684.72,423.96 L685.97,423.98 L687.22,424.02 L688.47,424.09 L689.72,424.17 L690.97,424.27 L692.22,424.39 L693.47,424.50 L694.71,424.63 L695.96,424.75 L697.21,424.86 L698.46,424.97 L699.71,425.06 L700.96,425.15 L702.21,425.22 L703.46,425.28 L704.71,425.33 L705.96,425.37 L707.21,425.41 L708.46,425.43 L709.71,425.45 L710.95,425.47 L712.20,425.48 L713.45,425.48 L714.70,425.49 L715.95,425.49 L717.20,425.50 L718.45,425.50 L719.70,425.50 L720.95,425.50 L722.20,425.50 L723.45,425.50 L724.70,425.50 L725.95,425.50 L727.19,425.50 L728.44,425.50 L729.69,425.50 L730.94,425.50 L732.19,425.50 L733.44,425.50 L734.69,425.50 L735.94,425.50 L737.19,425.50 L738.44,425.50 L739.69,425.50 L740.94,425.50 L742.19,425.50 L743.43,425.50 L744.68,425.50 L745.93,425.50 L747.18,425.50 L748.43,425.50 L749.68,425.50 L750.93,425.50 L752.18,425.50 L753.43,425.50 L754.68,425.50 L755.93,425.50 L757.18,425.50 L758.43,425.50 L759.67,425.50 L760.92,425.50 L762.17,425.50 L763.42,425.50 L764.67,425.50 L765.92,425.50 L767.17,425.50 L768.42,425.50 L769.67,425.50 L770.92,425.50 L772.17,425.50 L773.42,425.50 L774.67,425.50 L775.91,425.50 L777.16,425.50 L778.41,425.50 L779.66,425.50 L780.91,425.50 L782.16,425.50 L783.41,425.50 L784.66,425.50 L785.91,425.50 L787.16,425.50 L788.41,425.50 L789.66,425.50 L790.91,425.50 L792.15,425.50 L793.40,425.50 L794.65,425.50 L795.90,425.50 L797.15,425.50 L798.40,425.50 L799.65,425.50 L800.90,425.50 L802.15,425.50 L803.40,425.50 L804.65,425.50 L805.90,425.50 L807.15,425.50 L808.39,425.50 L809.64,425.50 L810.89,425.50 L812.14,425.50 L813.39,425.50 L814.64,425.50 L815.89,425.50 L817.14,425.50 L818.39,425.50 L819.64,425.50 L820.89,425.50 L822.14,425.50 L823.39,425.50 L824.63,425.50 L825.88,425.50 L827.13,425.50 L828.38,425.50 L829.63,425.50 L830.88,425.50 L832.13,425.50 L833.38,425.50 L834.63,425.50 L835.88,425.50 L837.13,425.50 L838.38,425.50 L839.63,425.50 L840.87,425.50 L842.12,425.50 L843.37,425.50 L844.62,425.50 L845.87,425.50 L847.12,425.50 L848.37,425.50 L849.62,425.50 L850.87,425.50 L852.12,425.50 L853.37,425.50 L854.62,425.50 L855.87,425.50 L857.11,425.50 L858.36,425.50 L859.61,425.50 L860.86,425.50 L862.11,425.50 L863.36,425.50 L864.61,425.50 L865.86,425.50 L867.11,425.50 L868.36,425.50 L869.61,425.50 L870.86,425.50 L872.11,425.50 L873.35,425.50 L874.60,425.50 L875.85,425.50 L877.10,425.50 L878.35,425.50 L879.60,425.50 L880.85,425.50 L882.10,425.50 L883.35,425.50 L884.60,425.50 L885.85,425.50 L887.10,425.50 L888.35,425.50 L889.59,425.50 L890.84,425.50 L892.09,425.50 L893.34,425.50 L894.59,425.50 L895.84,425.50 L897.09,425.50 L898.34,425.50 L899.59,425.50 L900.84,425.50 L902.09,425.50 L903.34,425.50 L904.59,425.50 L905.83,425.50 L907.08,425.50 L908.33,425.50 L909.58,425.50 L910.83,425.50 L912.08,425.50 L913.33,425.50 L914.58,425.50 L915.83,425.50 L917.08,425.50 L918.33,425.50 L919.58,425.50 L920.83,425.50 L922.07,425.50 L923.32,425.50 L924.57,425.50 L925.82,425.50 L927.07,425.50 L928.32,425.50 L929.57,425.50 L930.82,425.50 L932.07,425.50 L933.32,425.50 L934.57,425.49 L935.82,425.49 L937.06,425.48 L938.31,425.47 L939.56,425.46 L940.81,425.45 L942.06,425.43 L943.31,425.40 L944.56,425.37 L945.81,425.33 L947.06,425.27 L948.31,425.21 L949.56,425.13 L950.81,425.05 L952.06,424.95 L953.30,424.84 L954.55,424.73 L955.80,424.61 L957.05,424.49 L958.30,424.37 L959.55,424.26 L960.80,424.16 L962.05,424.08 L963.30,424.01 L964.55,423.98 L965.80,423.96 L965.80,425.50 Z" fill="#fde725"/><path d="M342.43,420.98 L343.68,420.55 L344.93,420.12 L346.18,419.71 L347.43,419.32 L348.68,418.97 L349.93,418.64 L351.18,418.36 L352.43,418.13 L353.68,417.94 L354.92,417.79 L356.17,417.69 L357.42,417.62 L358.67,417.58 L359.92,417.54 L361.17,417.50 L362.42,417.44 L363.67,417.33 L364.92,417.15 L366.17,416.90 L367.42,416.56 L368.67,416.11 L369.92,415.55 L371.16,414.89 L372.41,414.14 L373.66,413.32 L374.91,412.44 L376.16,411.54 L377.41,410.66 L378.66,409.81 L379.91,409.05 L381.16,408.40 L382.41,407.89 L383.66,407.53 L384.91,407.35 L386.16,407.34 L387.40,407.49 L388.65,407.81 L389.90,408.25 L391.15,408.81 L392.40,409.45 L393.65,410.14 L394.90,410.85 L396.15,411.54 L397.40,412.19 L398.65,412.77 L399.90,413.26 L401.15,413.65 L402.40,413.91 L403.64,414.04 L404.89,414.03 L406.14,413.88 L407.39,413.59 L408.64,413.16 L409.89,412.62 L411.14,411.96 L412.39,411.21 L413.64,410.39 L414.89,409.52 L416.14,408.62 L417.39,407.72 L418.64,406.84 L419.88,405.99 L421.13,405.19 L422.38,404.44 L423.63,403.75 L424.88,403.11 L426.13,402.52 L427.38,401.98 L428.63,401.46 L429.88,400.96 L431.13,400.47 L432.38,399.99 L433.63,399.51 L434.88,399.04 L436.12,398.60 L437.37,398.19 L438.62,397.84 L439.87,397.56 L441.12,397.38 L442.37,397.30 L443.62,397.36 L444.87,397.54 L446.12,397.87 L447.37,398.32 L448.62,398.90 L449.87,399.58 L451.12,400.35 L452.36,401.19 L453.61,402.07 L454.86,402.97 L456.11,403.86 L457.36,404.74 L458.61,405.58 L459.86,406.37 L461.11,407.10 L462.36,407.77 L463.61,408.38 L464.86,408.93 L466.11,409.43 L467.36,409.87 L468.60,410.28 L469.85,410.66 L471.10,411.02 L472.35,411.37 L473.60,411.73 L474.85,412.09 L476.10,412.46 L477.35,412.86 L478.60,413.26 L479.85,413.68 L481.10,414.11 L482.35,414.52 L483.59,414.93 L484.84,415.30 L486.09,415.63 L487.34,415.92 L488.59,416.16 L489.84,416.33 L491.09,416.45 L492.34,416.52 L493.59,416.54 L494.84,416.53 L496.09,416.50 L497.34,416.45 L498.59,416.40 L499.83,416.37 L501.08,416.34 L502.33,416.35 L503.58,416.38 L504.83,416.44 L506.08,416.52 L507.33,416.64 L508.58,416.78 L509.83,416.95 L511.08,417.14 L512.33,417.36 L513.58,417.59 L514.83,417.85 L516.07,418.14 L517.32,418.44 L518.57,418.77 L519.82,419.12 L521.07,419.49 L522.32,419.87 L523.57,420.26 L524.82,420.66 L526.07,421.06 L527.32,421.46 L528.57,421.85 L529.82,422.22 L531.07,422.57 L532.31,422.89 L533.56,423.19 L534.81,423.45 L536.06,423.67 L537.31,423.85 L538.56,424.00 L539.81,424.10 L541.06,424.17 L542.31,424.21 L543.56,424.21 L544.81,424.19 L546.06,424.15 L547.31,424.11 L548.55,424.05 L549.80,424.00 L551.05,423.96 L552.30,423.93 L553.55,423.93 L554.80,423.94 L556.05,423.97 L557.30,424.03 L558.55,424.11 L559.80,424.20 L561.05,424.31 L562.30,424.43 L563.55,424.55 L564.79,424.67 L566.04,424.79 L567.29,424.90 L568.54,425.00 L569.79,425.09 L571.04,425.17 L572.29,425.24 L573.54,425.30 L574.79,425.35 L576.04,425.39 L577.29,425.42 L578.54,425.44 L579.79,425.46 L581.03,425.47 L582.28,425.48 L583.53,425.49 L584.78,425.49 L586.03,425.49 L587.28,425.50 L588.53,425.50 L589.78,425.50 L591.03,425.50 L592.28,425.50 L593.53,425.50 L594.78,425.50 L596.03,425.50 L597.27,425.50 L598.52,425.50 L599.77,425.50 L601.02,425.50 L602.27,425.50 L603.52,425.50 L604.77,425.50 L606.02,425.50 L607.27,425.50 L608.52,425.50 L609.77,425.50 L611.02,425.50 L612.27,425.50 L613.51,425.50 L614.76,425.50 L616.01,425.50 L617.26,425.50 L618.51,425.50 L619.76,425.50 L621.01,425.50 L622.26,425.50 L623.51,425.50 L624.76,425.50 L626.01,425.50 L627.26,425.50 L628.51,425.50 L629.75,425.50 L631.00,425.50 L632.25,425.50 L633.50,425.50 L634.75,425.50 L636.00,425.50 L637.25,425.50 L638.50,425.50 L639.75,425.50 L641.00,425.50 L642.25,425.50 L643.50,425.50 L644.75,425.50 L645.99,425.50 L647.24,425.50 L648.49,425.50 L649.74,425.50 L650.99,425.50 L652.24,425.49 L653.49,425.49 L654.74,425.49 L655.99,425.48 L657.24,425.47 L658.49,425.46 L659.74,425.45 L660.99,425.43 L662.23,425.40 L663.48,425.36 L664.73,425.32 L665.98,425.26 L667.23,425.20 L668.48,425.12 L669.73,425.04 L670.98,424.94 L672.23,424.83 L673.48,424.71 L674.73,424.59 L675.98,424.47 L677.23,424.35 L678.47,424.24 L679.72,424.15 L680.97,424.07 L682.22,424.01 L683.47,423.97 L684.72,423.96 L685.97,423.98 L687.22,424.02 L688.47,424.09 L689.72,424.17 L690.97,424.27 L692.22,424.39 L693.47,424.50 L694.71,424.63 L695.96,424.75 L697.21,424.86 L698.46,424.97 L699.71,425.06 L700.96,425.15 L702.21,425.22 L703.46,425.28 L704.71,425.33 L705.96,425.37 L707.21,425.41 L708.46,425.43 L709.71,425.45 L710.95,425.47 L712.20,425.48 L713.45,425.48 L714.70,425.49 L715.95,425.49 L717.20,425.50 L718.45,425.50 L719.70,425.50 L720.95,425.50 L722.20,425.50 L723.45,425.50 L724.70,425.50 L725.95,425.50 L727.19,425.50 L728.44,425.50 L729.69,425.50 L730.94,425.50 L732.19,425.50 L733.44,425.50 L734.69,425.50 L735.94,425.50 L737.19,425.50 L738.44,425.50 L739.69,425.50 L740.94,425.50 L742.19,425.50 L743.43,425.50 L744.68,425.50 L745.93,425.50 L747.18,425.50 L748.43,425.50 L749.68,425.50 L750.93,425.50 L752.18,425.50 L753.43,425.50 L754.68,425.50 L755.93,425.50 L757.18,425.50 L758.43,425.50 L759.67,425.50 L760.92,425.50 L762.17,425.50 L763.42,425.50 L764.67,425.50 L765.92,425.50 L767.17,425.50 L768.42,425.50 L769.67,425.50 L770.92,425.50 L772.17,425.50 L773.42,425.50 L774.67,425.50 L775.91,425.50 L777.16,425.50 L778.41,425.50 L779.66,425.50 L780.91,425.50 L782.16,425.50 L783.41,425.50 L784.66,425.50 L785.91,425.50 L787.16,425.50 L788.41,425.50 L789.66,425.50 L790.91,425.50 L792.15,425.50 L793.40,425.50 L794.65,425.50 L795.90,425.50 L797.15,425.50 L798.40,425.50 L799.65,425.50 L800.90,425.50 L802.15,425.50 L803.40,425.50 L804.65,425.50 L805.90,425.50 L807.15,425.50 L808.39,425.50 L809.64,425.50 L810.89,425.50 L812.14,425.50 L813.39,425.50 L814.64,425.50 L815.89,425.50 L817.14,425.50 L818.39,425.50 L819.64,425.50 L820.89,425.50 L822.14,425.50 L823.39,425.50 L824.63,425.50 L825.88,425.50 L827.13,425.50 L828.38,425.50 L829.63,425.50 L830.88,425.50 L832.13,425.50 L833.38,425.50 L834.63,425.50 L835.88,425.50 L837.13,425.50 L838.38,425.50 L839.63,425.50 L840.87,425.50 L842.12,425.50 L843.37,425.50 L844.62,425.50 L845.87,425.50 L847.12,425.50 L848.37,425.50 L849.62,425.50 L850.87,425.50 L852.12,425.50 L853.37,425.50 L854.62,425.50 L855.87,425.50 L857.11,425.50 L858.36,425.50 L859.61,425.50 L860.86,425.50 L862.11,425.50 L863.36,425.50 L864.61,425.50 L865.86,425.50 L867.11,425.50 L868.36,425.50 L869.61,425.50 L870.86,425.50 L872.11,425.50 L873.35,425.50 L874.60,425.50 L875.85,425.50 L877.10,425.50 L878.35,425.50 L879.60,425.50 L880.85,425.50 L882.10,425.50 L883.35,425.50 L884.60,425.50 L885.85,425.50 L887.10,425.50 L888.35,425.50 L889.59,425.50 L890.84,425.50 L892.09,425.50 L893.34,425.50 L894.59,425.50 L895.84,425.50 L897.09,425.50 L898.34,425.50 L899.59,425.50 L900.84,425.50 L902.09,425.50 L903.34,425.50 L904.59,425.50 L905.83,425.50 L907.08,425.50 L908.33,425.50 L909.58,425.50 L910.83,425.50 L912.08,425.50 L913.33,425.50 L914.58,425.50 L915.83,425.50 L917.08,425.50 L918.33,425.50 L919.58,425.50 L920.83,425.50 L922.07,425.50 L923.32,425.50 L924.57,425.50 L925.82,425.50 L927.07,425.50 L928.32,425.50 L929.57,425.50 L930.82,425.50 L932.07,425.50 L933.32,425.50 L934.57,425.49 L935.82,425.49 L937.06,425.48 L938.31,425.47 L939.56,425.46 L940.81,425.45 L942.06,425.43 L943.31,425.40 L944.56,425.37 L945.81,425.33 L947.06,425.27 L948.31,425.21 L949.56,425.13 L950.81,425.05 L952.06,424.95 L953.30,424.84 L954.55,424.73 L955.80,424.61 L957.05,424.49 L958.30,424.37 L959.55,424.26 L960.80,424.16 L962.05,424.08 L963.30,424.01 L964.55,423.98 L965.80,423.96" fill="none" stroke="#0a0a0a" stroke-width="1.25" stroke-linejoin="round"/><path d="M319.63,443.85 L319.63,442.20 L320.19,442.16 L320.74,442.12 L321.30,442.08 L321.86,442.04 L322.41,442.01 L322.97,441.97 L323.53,441.93 L324.08,441.89 L324.64,441.84 L325.20,441.79 L325.76,441.75 L326.31,441.69 L326.87,441.64 L327.43,441.58 L327.98,441.52 L328.54,441.45 L329.10,441.38 L329.65,441.31 L330.21,441.23 L330.77,441.14 L331.32,441.06 L331.88,440.97 L332.44,440.87 L332.99,440.78 L333.55,440.68 L334.11,440.57 L334.66,440.46 L335.22,440.36 L335.78,440.24 L336.33,440.13 L336.89,440.02 L337.45,439.90 L338.00,439.78 L338.56,439.66 L339.12,439.54 L339.67,439.42 L340.23,439.29 L340.79,439.17 L341.34,439.04 L341.90,438.91 L342.46,438.77 L343.01,438.64 L343.57,438.50 L344.13,438.36 L344.68,438.21 L345.24,438.06 L345.80,437.90 L346.36,437.74 L346.91,437.58 L347.47,437.41 L348.03,437.23 L348.58,437.05 L349.14,436.86 L349.70,436.67 L350.25,436.48 L350.81,436.28 L351.37,436.07 L351.92,435.86 L352.48,435.65 L353.04,435.44 L353.59,435.23 L354.15,435.02 L354.71,434.81 L355.26,434.60 L355.82,434.40 L356.38,434.20 L356.93,434.01 L357.49,433.83 L358.05,433.66 L358.60,433.49 L359.16,433.34 L359.72,433.20 L360.27,433.08 L360.83,432.96 L361.39,432.87 L361.94,432.78 L362.50,432.72 L363.06,432.67 L363.61,432.63 L364.17,432.61 L364.73,432.60 L365.29,432.61 L365.84,432.63 L366.40,432.67 L366.96,432.71 L367.51,432.77 L368.07,432.83 L368.63,432.91 L369.18,432.99 L369.74,433.08 L370.30,433.17 L370.85,433.26 L371.41,433.36 L371.97,433.45 L372.52,433.55 L373.08,433.64 L373.64,433.73 L374.19,433.81 L374.75,433.90 L375.31,433.97 L375.86,434.04 L376.42,434.10 L376.98,434.16 L377.53,434.21 L378.09,434.25 L378.65,434.28 L379.20,434.31 L379.76,434.32 L380.32,434.33 L380.87,434.33 L381.43,434.33 L381.99,434.31 L382.54,434.29 L383.10,434.26 L383.66,434.22 L384.21,434.17 L384.77,434.12 L385.33,434.05 L385.89,433.98 L386.44,433.89 L387.00,433.80 L387.56,433.70 L388.11,433.58 L388.67,433.46 L389.23,433.32 L389.78,433.17 L390.34,433.01 L390.90,432.84 L391.45,432.66 L392.01,432.46 L392.57,432.25 L393.12,432.02 L393.68,431.78 L394.24,431.53 L394.79,431.27 L395.35,430.99 L395.91,430.70 L396.46,430.40 L397.02,430.09 L397.58,429.77 L398.13,429.43 L398.69,429.09 L399.25,428.75 L399.80,428.39 L400.36,428.03 L400.92,427.66 L401.47,427.29 L402.03,426.92 L402.59,426.54 L403.14,426.17 L403.70,425.79 L404.26,425.42 L404.82,425.04 L405.37,424.67 L405.93,424.31 L406.49,423.94 L407.04,423.59 L407.60,423.24 L408.16,422.89 L408.71,422.55 L409.27,422.22 L409.83,421.90 L410.38,421.58 L410.94,421.28 L411.50,420.98 L412.05,420.68 L412.61,420.40 L413.17,420.12 L413.72,419.86 L414.28,419.59 L414.84,419.34 L415.39,419.09 L415.95,418.85 L416.51,418.62 L417.06,418.39 L417.62,418.17 L418.18,417.96 L418.73,417.75 L419.29,417.55 L419.85,417.36 L420.40,417.17 L420.96,417.00 L421.52,416.83 L422.07,416.67 L422.63,416.52 L423.19,416.37 L423.74,416.25 L424.30,416.13 L424.86,416.03 L425.42,415.94 L425.97,415.87 L426.53,415.81 L427.09,415.78 L427.64,415.76 L428.20,415.76 L428.76,415.79 L429.31,415.84 L429.87,415.91 L430.43,416.01 L430.98,416.13 L431.54,416.28 L432.10,416.46 L432.65,416.66 L433.21,416.88 L433.77,417.14 L434.32,417.41 L434.88,417.71 L435.44,418.03 L435.99,418.37 L436.55,418.73 L437.11,419.11 L437.66,419.50 L438.22,419.90 L438.78,420.32 L439.33,420.74 L439.89,421.17 L440.45,421.59 L441.00,422.02 L441.56,422.45 L442.12,422.87 L442.67,423.28 L443.23,423.68 L443.79,424.06 L444.35,424.43 L444.90,424.78 L445.46,425.11 L446.02,425.42 L446.57,425.71 L447.13,425.97 L447.69,426.20 L448.24,426.41 L448.80,426.59 L449.36,426.74 L449.91,426.86 L450.47,426.95 L451.03,427.01 L451.58,427.05 L452.14,427.05 L452.70,427.03 L453.25,426.98 L453.81,426.90 L454.37,426.80 L454.92,426.67 L455.48,426.52 L456.04,426.35 L456.59,426.16 L457.15,425.95 L457.71,425.72 L458.26,425.47 L458.82,425.21 L459.38,424.94 L459.93,424.66 L460.49,424.37 L461.05,424.08 L461.60,423.78 L462.16,423.48 L462.72,423.18 L463.27,422.88 L463.83,422.59 L464.39,422.30 L464.95,422.02 L465.50,421.76 L466.06,421.50 L466.62,421.27 L467.17,421.05 L467.73,420.85 L468.29,420.67 L468.84,420.52 L469.40,420.39 L469.96,420.29 L470.51,420.22 L471.07,420.18 L471.63,420.17 L472.18,420.20 L472.74,420.26 L473.30,420.35 L473.85,420.48 L474.41,420.64 L474.97,420.84 L475.52,421.08 L476.08,421.35 L476.64,421.65 L477.19,421.99 L477.75,422.36 L478.31,422.76 L478.86,423.19 L479.42,423.64 L479.98,424.12 L480.53,424.62 L481.09,425.14 L481.65,425.68 L482.20,426.24 L482.76,426.80 L483.32,427.38 L483.88,427.96 L484.43,428.54 L484.99,429.13 L485.55,429.71 L486.10,430.29 L486.66,430.86 L487.22,431.43 L487.77,431.98 L488.33,432.52 L488.89,433.04 L489.44,433.55 L490.00,434.04 L490.56,434.51 L491.11,434.96 L491.67,435.39 L492.23,435.79 L492.78,436.18 L493.34,436.54 L493.90,436.88 L494.45,437.20 L495.01,437.49 L495.57,437.77 L496.12,438.03 L496.68,438.26 L497.24,438.48 L497.79,438.68 L498.35,438.87 L498.91,439.04 L499.46,439.20 L500.02,439.35 L500.58,439.49 L501.13,439.62 L501.69,439.74 L502.25,439.85 L502.81,439.96 L503.36,440.06 L503.92,440.17 L504.48,440.26 L505.03,440.36 L505.59,440.46 L506.15,440.56 L506.70,440.65 L507.26,440.75 L507.82,440.85 L508.37,440.95 L508.93,441.05 L509.49,441.16 L510.04,441.26 L510.60,441.37 L511.16,441.48 L511.71,441.59 L512.27,441.69 L512.83,441.80 L513.38,441.91 L513.94,442.02 L514.50,442.12 L515.05,442.23 L515.61,442.33 L516.17,442.43 L516.72,442.53 L517.28,442.62 L517.84,442.71 L518.39,442.80 L518.95,442.88 L519.51,442.96 L520.06,443.04 L520.62,443.11 L521.18,443.17 L521.73,443.24 L522.29,443.29 L522.85,443.35 L523.41,443.40 L523.96,443.44 L524.52,443.48 L525.08,443.52 L525.63,443.55 L526.19,443.58 L526.75,443.60 L527.30,443.63 L527.86,443.64 L528.42,443.66 L528.97,443.67 L529.53,443.68 L530.09,443.68 L530.64,443.68 L531.20,443.68 L531.76,443.68 L532.31,443.67 L532.87,443.66 L533.43,443.65 L533.98,443.63 L534.54,443.62 L535.10,443.59 L535.65,443.57 L536.21,443.54 L536.77,443.51 L537.32,443.48 L537.88,443.44 L538.44,443.41 L538.99,443.37 L539.55,443.32 L540.11,443.27 L540.66,443.23 L541.22,443.17 L541.78,443.12 L542.34,443.06 L542.89,443.01 L543.45,442.95 L544.01,442.88 L544.56,442.82 L545.12,442.76 L545.68,442.69 L546.23,442.63 L546.79,442.56 L547.35,442.50 L547.90,442.43 L548.46,442.37 L549.02,442.30 L549.57,442.24 L550.13,442.18 L550.69,442.12 L551.24,442.07 L551.80,442.01 L552.36,441.96 L552.91,441.91 L553.47,441.87 L554.03,441.83 L554.58,441.79 L555.14,441.76 L555.70,441.73 L556.25,441.70 L556.81,441.68 L557.37,441.66 L557.92,441.65 L558.48,441.64 L559.04,441.64 L559.59,441.64 L560.15,441.64 L560.71,441.66 L561.26,441.67 L561.82,441.69 L562.38,441.71 L562.94,441.74 L563.49,441.77 L564.05,441.81 L564.61,441.84 L565.16,441.89 L565.72,441.93 L566.28,441.98 L566.83,442.03 L567.39,442.09 L567.95,442.14 L568.50,442.20 L569.06,442.26 L569.62,442.32 L570.17,442.38 L570.73,442.44 L571.29,442.50 L571.84,442.56 L572.40,442.62 L572.96,442.68 L573.51,442.73 L574.07,442.79 L574.63,442.84 L575.18,442.89 L575.74,442.94 L576.30,442.98 L576.85,443.02 L577.41,443.05 L577.97,443.09 L578.52,443.11 L579.08,443.14 L579.64,443.16 L580.19,443.17 L580.75,443.18 L581.31,443.18 L581.87,443.19 L582.42,443.18 L582.98,443.17 L583.54,443.16 L584.09,443.15 L584.65,443.13 L585.21,443.10 L585.76,443.08 L586.32,443.05 L586.88,443.02 L587.43,442.98 L587.99,442.95 L588.55,442.91 L589.10,442.87 L589.66,442.83 L590.22,442.80 L590.77,442.76 L591.33,442.72 L591.89,442.69 L592.44,442.66 L593.00,442.63 L593.56,442.60 L594.11,442.57 L594.67,442.55 L595.23,442.53 L595.78,442.52 L596.34,442.51 L596.90,442.50 L597.45,442.50 L597.45,443.85 Z" fill="#35b779"/><path d="M319.63,442.20 L320.19,442.16 L320.74,442.12 L321.30,442.08 L321.86,442.04 L322.41,442.01 L322.97,441.97 L323.53,441.93 L324.08,441.89 L324.64,441.84 L325.20,441.79 L325.76,441.75 L326.31,441.69 L326.87,441.64 L327.43,441.58 L327.98,441.52 L328.54,441.45 L329.10,441.38 L329.65,441.31 L330.21,441.23 L330.77,441.14 L331.32,441.06 L331.88,440.97 L332.44,440.87 L332.99,440.78 L333.55,440.68 L334.11,440.57 L334.66,440.46 L335.22,440.36 L335.78,440.24 L336.33,440.13 L336.89,440.02 L337.45,439.90 L338.00,439.78 L338.56,439.66 L339.12,439.54 L339.67,439.42 L340.23,439.29 L340.79,439.17 L341.34,439.04 L341.90,438.91 L342.46,438.77 L343.01,438.64 L343.57,438.50 L344.13,438.36 L344.68,438.21 L345.24,438.06 L345.80,437.90 L346.36,437.74 L346.91,437.58 L347.47,437.41 L348.03,437.23 L348.58,437.05 L349.14,436.86 L349.70,436.67 L350.25,436.48 L350.81,436.28 L351.37,436.07 L351.92,435.86 L352.48,435.65 L353.04,435.44 L353.59,435.23 L354.15,435.02 L354.71,434.81 L355.26,434.60 L355.82,434.40 L356.38,434.20 L356.93,434.01 L357.49,433.83 L358.05,433.66 L358.60,433.49 L359.16,433.34 L359.72,433.20 L360.27,433.08 L360.83,432.96 L361.39,432.87 L361.94,432.78 L362.50,432.72 L363.06,432.67 L363.61,432.63 L364.17,432.61 L364.73,432.60 L365.29,432.61 L365.84,432.63 L366.40,432.67 L366.96,432.71 L367.51,432.77 L368.07,432.83 L368.63,432.91 L369.18,432.99 L369.74,433.08 L370.30,433.17 L370.85,433.26 L371.41,433.36 L371.97,433.45 L372.52,433.55 L373.08,433.64 L373.64,433.73 L374.19,433.81 L374.75,433.90 L375.31,433.97 L375.86,434.04 L376.42,434.10 L376.98,434.16 L377.53,434.21 L378.09,434.25 L378.65,434.28 L379.20,434.31 L379.76,434.32 L380.32,434.33 L380.87,434.33 L381.43,434.33 L381.99,434.31 L382.54,434.29 L383.10,434.26 L383.66,434.22 L384.21,434.17 L384.77,434.12 L385.33,434.05 L385.89,433.98 L386.44,433.89 L387.00,433.80 L387.56,433.70 L388.11,433.58 L388.67,433.46 L389.23,433.32 L389.78,433.17 L390.34,433.01 L390.90,432.84 L391.45,432.66 L392.01,432.46 L392.57,432.25 L393.12,432.02 L393.68,431.78 L394.24,431.53 L394.79,431.27 L395.35,430.99 L395.91,430.70 L396.46,430.40 L397.02,430.09 L397.58,429.77 L398.13,429.43 L398.69,429.09 L399.25,428.75 L399.80,428.39 L400.36,428.03 L400.92,427.66 L401.47,427.29 L402.03,426.92 L402.59,426.54 L403.14,426.17 L403.70,425.79 L404.26,425.42 L404.82,425.04 L405.37,424.67 L405.93,424.31 L406.49,423.94 L407.04,423.59 L407.60,423.24 L408.16,422.89 L408.71,422.55 L409.27,422.22 L409.83,421.90 L410.38,421.58 L410.94,421.28 L411.50,420.98 L412.05,420.68 L412.61,420.40 L413.17,420.12 L413.72,419.86 L414.28,419.59 L414.84,419.34 L415.39,419.09 L415.95,418.85 L416.51,418.62 L417.06,418.39 L417.62,418.17 L418.18,417.96 L418.73,417.75 L419.29,417.55 L419.85,417.36 L420.40,417.17 L420.96,417.00 L421.52,416.83 L422.07,416.67 L422.63,416.52 L423.19,416.37 L423.74,416.25 L424.30,416.13 L424.86,416.03 L425.42,415.94 L425.97,415.87 L426.53,415.81 L427.09,415.78 L427.64,415.76 L428.20,415.76 L428.76,415.79 L429.31,415.84 L429.87,415.91 L430.43,416.01 L430.98,416.13 L431.54,416.28 L432.10,416.46 L432.65,416.66 L433.21,416.88 L433.77,417.14 L434.32,417.41 L434.88,417.71 L435.44,418.03 L435.99,418.37 L436.55,418.73 L437.11,419.11 L437.66,419.50 L438.22,419.90 L438.78,420.32 L439.33,420.74 L439.89,421.17 L440.45,421.59 L441.00,422.02 L441.56,422.45 L442.12,422.87 L442.67,423.28 L443.23,423.68 L443.79,424.06 L444.35,424.43 L444.90,424.78 L445.46,425.11 L446.02,425.42 L446.57,425.71 L447.13,425.97 L447.69,426.20 L448.24,426.41 L448.80,426.59 L449.36,426.74 L449.91,426.86 L450.47,426.95 L451.03,427.01 L451.58,427.05 L452.14,427.05 L452.70,427.03 L453.25,426.98 L453.81,426.90 L454.37,426.80 L454.92,426.67 L455.48,426.52 L456.04,426.35 L456.59,426.16 L457.15,425.95 L457.71,425.72 L458.26,425.47 L458.82,425.21 L459.38,424.94 L459.93,424.66 L460.49,424.37 L461.05,424.08 L461.60,423.78 L462.16,423.48 L462.72,423.18 L463.27,422.88 L463.83,422.59 L464.39,422.30 L464.95,422.02 L465.50,421.76 L466.06,421.50 L466.62,421.27 L467.17,421.05 L467.73,420.85 L468.29,420.67 L468.84,420.52 L469.40,420.39 L469.96,420.29 L470.51,420.22 L471.07,420.18 L471.63,420.17 L472.18,420.20 L472.74,420.26 L473.30,420.35 L473.85,420.48 L474.41,420.64 L474.97,420.84 L475.52,421.08 L476.08,421.35 L476.64,421.65 L477.19,421.99 L477.75,422.36 L478.31,422.76 L478.86,423.19 L479.42,423.64 L479.98,424.12 L480.53,424.62 L481.09,425.14 L481.65,425.68 L482.20,426.24 L482.76,426.80 L483.32,427.38 L483.88,427.96 L484.43,428.54 L484.99,429.13 L485.55,429.71 L486.10,430.29 L486.66,430.86 L487.22,431.43 L487.77,431.98 L488.33,432.52 L488.89,433.04 L489.44,433.55 L490.00,434.04 L490.56,434.51 L491.11,434.96 L491.67,435.39 L492.23,435.79 L492.78,436.18 L493.34,436.54 L493.90,436.88 L494.45,437.20 L495.01,437.49 L495.57,437.77 L496.12,438.03 L496.68,438.26 L497.24,438.48 L497.79,438.68 L498.35,438.87 L498.91,439.04 L499.46,439.20 L500.02,439.35 L500.58,439.49 L501.13,439.62 L501.69,439.74 L502.25,439.85 L502.81,439.96 L503.36,440.06 L503.92,440.17 L504.48,440.26 L505.03,440.36 L505.59,440.46 L506.15,440.56 L506.70,440.65 L507.26,440.75 L507.82,440.85 L508.37,440.95 L508.93,441.05 L509.49,441.16 L510.04,441.26 L510.60,441.37 L511.16,441.48 L511.71,441.59 L512.27,441.69 L512.83,441.80 L513.38,441.91 L513.94,442.02 L514.50,442.12 L515.05,442.23 L515.61,442.33 L516.17,442.43 L516.72,442.53 L517.28,442.62 L517.84,442.71 L518.39,442.80 L518.95,442.88 L519.51,442.96 L520.06,443.04 L520.62,443.11 L521.18,443.17 L521.73,443.24 L522.29,443.29 L522.85,443.35 L523.41,443.40 L523.96,443.44 L524.52,443.48 L525.08,443.52 L525.63,443.55 L526.19,443.58 L526.75,443.60 L527.30,443.63 L527.86,443.64 L528.42,443.66 L528.97,443.67 L529.53,443.68 L530.09,443.68 L530.64,443.68 L531.20,443.68 L531.76,443.68 L532.31,443.67 L532.87,443.66 L533.43,443.65 L533.98,443.63 L534.54,443.62 L535.10,443.59 L535.65,443.57 L536.21,443.54 L536.77,443.51 L537.32,443.48 L537.88,443.44 L538.44,443.41 L538.99,443.37 L539.55,443.32 L540.11,443.27 L540.66,443.23 L541.22,443.17 L541.78,443.12 L542.34,443.06 L542.89,443.01 L543.45,442.95 L544.01,442.88 L544.56,442.82 L545.12,442.76 L545.68,442.69 L546.23,442.63 L546.79,442.56 L547.35,442.50 L547.90,442.43 L548.46,442.37 L549.02,442.30 L549.57,442.24 L550.13,442.18 L550.69,442.12 L551.24,442.07 L551.80,442.01 L552.36,441.96 L552.91,441.91 L553.47,441.87 L554.03,441.83 L554.58,441.79 L555.14,441.76 L555.70,441.73 L556.25,441.70 L556.81,441.68 L557.37,441.66 L557.92,441.65 L558.48,441.64 L559.04,441.64 L559.59,441.64 L560.15,441.64 L560.71,441.66 L561.26,441.67 L561.82,441.69 L562.38,441.71 L562.94,441.74 L563.49,441.77 L564.05,441.81 L564.61,441.84 L565.16,441.89 L565.72,441.93 L566.28,441.98 L566.83,442.03 L567.39,442.09 L567.95,442.14 L568.50,442.20 L569.06,442.26 L569.62,442.32 L570.17,442.38 L570.73,442.44 L571.29,442.50 L571.84,442.56 L572.40,442.62 L572.96,442.68 L573.51,442.73 L574.07,442.79 L574.63,442.84 L575.18,442.89 L575.74,442.94 L576.30,442.98 L576.85,443.02 L577.41,443.05 L577.97,443.09 L578.52,443.11 L579.08,443.14 L579.64,443.16 L580.19,443.17 L580.75,443.18 L581.31,443.18 L581.87,443.19 L582.42,443.18 L582.98,443.17 L583.54,443.16 L584.09,443.15 L584.65,443.13 L585.21,443.10 L585.76,443.08 L586.32,443.05 L586.88,443.02 L587.43,442.98 L587.99,442.95 L588.55,442.91 L589.10,442.87 L589.66,442.83 L590.22,442.80 L590.77,442.76 L591.33,442.72 L591.89,442.69 L592.44,442.66 L593.00,442.63 L593.56,442.60 L594.11,442.57 L594.67,442.55 L595.23,442.53 L595.78,442.52 L596.34,442.51 L596.90,442.50 L597.45,442.50" fill="none" stroke="#0a0a0a" stroke-width="1.25" stroke-linejoin="round"/><path d="M355.38,462.20 L355.38,458.12 L355.75,458.05 L356.12,457.97 L356.49,457.90 L356.86,457.83 L357.23,457.77 L357.60,457.70 L357.97,457.64 L358.34,457.58 L358.71,457.53 L359.09,457.48 L359.46,457.43 L359.83,457.38 L360.20,457.34 L360.57,457.30 L360.94,457.26 L361.31,457.22 L361.68,457.19 L362.05,457.16 L362.43,457.13 L362.80,457.11 L363.17,457.08 L363.54,457.06 L363.91,457.04 L364.28,457.03 L364.65,457.02 L365.02,457.00 L365.39,457.00 L365.77,456.99 L366.14,456.99 L366.51,456.98 L366.88,456.98 L367.25,456.99 L367.62,456.99 L367.99,457.00 L368.36,457.00 L368.73,457.01 L369.11,457.03 L369.48,457.04 L369.85,457.06 L370.22,457.08 L370.59,457.10 L370.96,457.12 L371.33,457.14 L371.70,457.17 L372.07,457.19 L372.45,457.22 L372.82,457.25 L373.19,457.28 L373.56,457.31 L373.93,457.35 L374.30,457.38 L374.67,457.42 L375.04,457.45 L375.41,457.49 L375.78,457.52 L376.16,457.56 L376.53,457.60 L376.90,457.63 L377.27,457.67 L377.64,457.70 L378.01,457.73 L378.38,457.76 L378.75,457.78 L379.12,457.81 L379.50,457.83 L379.87,457.85 L380.24,457.86 L380.61,457.87 L380.98,457.87 L381.35,457.87 L381.72,457.86 L382.09,457.85 L382.46,457.83 L382.84,457.80 L383.21,457.76 L383.58,457.72 L383.95,457.67 L384.32,457.61 L384.69,457.54 L385.06,457.46 L385.43,457.37 L385.80,457.27 L386.18,457.16 L386.55,457.04 L386.92,456.91 L387.29,456.76 L387.66,456.61 L388.03,456.44 L388.40,456.26 L388.77,456.07 L389.14,455.87 L389.51,455.65 L389.89,455.42 L390.26,455.18 L390.63,454.93 L391.00,454.67 L391.37,454.40 L391.74,454.11 L392.11,453.81 L392.48,453.50 L392.85,453.18 L393.23,452.85 L393.60,452.52 L393.97,452.17 L394.34,451.81 L394.71,451.44 L395.08,451.07 L395.45,450.68 L395.82,450.29 L396.19,449.90 L396.57,449.49 L396.94,449.09 L397.31,448.67 L397.68,448.25 L398.05,447.83 L398.42,447.40 L398.79,446.97 L399.16,446.54 L399.53,446.11 L399.91,445.67 L400.28,445.23 L400.65,444.79 L401.02,444.36 L401.39,443.92 L401.76,443.48 L402.13,443.04 L402.50,442.60 L402.87,442.17 L403.25,441.74 L403.62,441.30 L403.99,440.88 L404.36,440.45 L404.73,440.02 L405.10,439.60 L405.47,439.19 L405.84,438.77 L406.21,438.36 L406.58,437.95 L406.96,437.54 L407.33,437.14 L407.70,436.74 L408.07,436.35 L408.44,435.95 L408.81,435.56 L409.18,435.18 L409.55,434.80 L409.92,434.42 L410.30,434.05 L410.67,433.68 L411.04,433.31 L411.41,432.95 L411.78,432.60 L412.15,432.24 L412.52,431.90 L412.89,431.55 L413.26,431.22 L413.64,430.88 L414.01,430.56 L414.38,430.23 L414.75,429.92 L415.12,429.61 L415.49,429.31 L415.86,429.01 L416.23,428.73 L416.60,428.45 L416.98,428.18 L417.35,427.91 L417.72,427.66 L418.09,427.42 L418.46,427.18 L418.83,426.96 L419.20,426.75 L419.57,426.55 L419.94,426.36 L420.32,426.19 L420.69,426.02 L421.06,425.87 L421.43,425.74 L421.80,425.62 L422.17,425.51 L422.54,425.42 L422.91,425.34 L423.28,425.28 L423.65,425.24 L424.03,425.21 L424.40,425.20 L424.77,425.21 L425.14,425.23 L425.51,425.27 L425.88,425.33 L426.25,425.41 L426.62,425.50 L426.99,425.61 L427.37,425.75 L427.74,425.89 L428.11,426.06 L428.48,426.24 L428.85,426.44 L429.22,426.66 L429.59,426.90 L429.96,427.15 L430.33,427.42 L430.71,427.70 L431.08,428.00 L431.45,428.31 L431.82,428.64 L432.19,428.98 L432.56,429.33 L432.93,429.69 L433.30,430.07 L433.67,430.45 L434.05,430.84 L434.42,431.25 L434.79,431.65 L435.16,432.07 L435.53,432.49 L435.90,432.91 L436.27,433.34 L436.64,433.77 L437.01,434.19 L437.38,434.62 L437.76,435.05 L438.13,435.47 L438.50,435.89 L438.87,436.30 L439.24,436.71 L439.61,437.11 L439.98,437.51 L440.35,437.89 L440.72,438.26 L441.10,438.62 L441.47,438.97 L441.84,439.31 L442.21,439.64 L442.58,439.95 L442.95,440.24 L443.32,440.52 L443.69,440.79 L444.06,441.04 L444.44,441.27 L444.81,441.49 L445.18,441.69 L445.55,441.88 L445.92,442.05 L446.29,442.20 L446.66,442.34 L447.03,442.46 L447.40,442.56 L447.78,442.65 L448.15,442.73 L448.52,442.79 L448.89,442.84 L449.26,442.88 L449.63,442.90 L450.00,442.91 L450.37,442.91 L450.74,442.90 L451.12,442.88 L451.49,442.85 L451.86,442.81 L452.23,442.77 L452.60,442.72 L452.97,442.66 L453.34,442.59 L453.71,442.52 L454.08,442.45 L454.45,442.37 L454.83,442.29 L455.20,442.20 L455.57,442.11 L455.94,442.02 L456.31,441.93 L456.68,441.84 L457.05,441.75 L457.42,441.65 L457.79,441.56 L458.17,441.46 L458.54,441.36 L458.91,441.27 L459.28,441.17 L459.65,441.08 L460.02,440.98 L460.39,440.89 L460.76,440.80 L461.13,440.71 L461.51,440.61 L461.88,440.52 L462.25,440.44 L462.62,440.35 L462.99,440.26 L463.36,440.18 L463.73,440.09 L464.10,440.01 L464.47,439.93 L464.85,439.85 L465.22,439.78 L465.59,439.71 L465.96,439.64 L466.33,439.57 L466.70,439.51 L467.07,439.45 L467.44,439.40 L467.81,439.35 L468.18,439.30 L468.56,439.26 L468.93,439.23 L469.30,439.20 L469.67,439.18 L470.04,439.17 L470.41,439.16 L470.78,439.16 L471.15,439.17 L471.52,439.19 L471.90,439.21 L472.27,439.25 L472.64,439.29 L473.01,439.34 L473.38,439.40 L473.75,439.48 L474.12,439.56 L474.49,439.65 L474.86,439.75 L475.24,439.86 L475.61,439.98 L475.98,440.11 L476.35,440.26 L476.72,440.41 L477.09,440.57 L477.46,440.74 L477.83,440.91 L478.20,441.10 L478.58,441.30 L478.95,441.50 L479.32,441.71 L479.69,441.94 L480.06,442.16 L480.43,442.40 L480.80,442.64 L481.17,442.89 L481.54,443.14 L481.92,443.40 L482.29,443.66 L482.66,443.93 L483.03,444.21 L483.40,444.48 L483.77,444.76 L484.14,445.05 L484.51,445.33 L484.88,445.62 L485.25,445.92 L485.63,446.21 L486.00,446.50 L486.37,446.80 L486.74,447.09 L487.11,447.39 L487.48,447.69 L487.85,447.98 L488.22,448.28 L488.59,448.57 L488.97,448.87 L489.34,449.16 L489.71,449.45 L490.08,449.74 L490.45,450.03 L490.82,450.32 L491.19,450.60 L491.56,450.88 L491.93,451.15 L492.31,451.43 L492.68,451.70 L493.05,451.96 L493.42,452.22 L493.79,452.48 L494.16,452.73 L494.53,452.98 L494.90,453.23 L495.27,453.46 L495.65,453.70 L496.02,453.92 L496.39,454.14 L496.76,454.36 L497.13,454.57 L497.50,454.77 L497.87,454.96 L498.24,455.15 L498.61,455.34 L498.99,455.51 L499.36,455.68 L499.73,455.84 L500.10,455.99 L500.47,456.14 L500.84,456.28 L501.21,456.41 L501.58,456.53 L501.95,456.65 L502.32,456.76 L502.70,456.87 L503.07,456.96 L503.44,457.05 L503.81,457.14 L504.18,457.21 L504.55,457.28 L504.92,457.35 L505.29,457.41 L505.66,457.46 L506.04,457.51 L506.41,457.56 L506.78,457.60 L507.15,457.64 L507.52,457.67 L507.89,457.70 L508.26,457.73 L508.63,457.75 L509.00,457.78 L509.38,457.80 L509.75,457.82 L510.12,457.84 L510.49,457.85 L510.86,457.87 L511.23,457.89 L511.60,457.91 L511.97,457.93 L512.34,457.95 L512.72,457.97 L513.09,457.99 L513.46,458.02 L513.83,458.04 L514.20,458.07 L514.57,458.10 L514.94,458.13 L515.31,458.17 L515.68,458.20 L516.05,458.24 L516.43,458.29 L516.80,458.33 L517.17,458.38 L517.54,458.43 L517.91,458.48 L518.28,458.53 L518.65,458.59 L519.02,458.64 L519.39,458.70 L519.77,458.76 L520.14,458.82 L520.51,458.88 L520.88,458.95 L521.25,459.01 L521.62,459.07 L521.99,459.14 L522.36,459.20 L522.73,459.26 L523.11,459.33 L523.48,459.39 L523.85,459.45 L524.22,459.51 L524.59,459.56 L524.96,459.62 L525.33,459.67 L525.70,459.72 L526.07,459.77 L526.45,459.82 L526.82,459.86 L527.19,459.91 L527.56,459.94 L527.93,459.98 L528.30,460.01 L528.67,460.04 L529.04,460.07 L529.41,460.10 L529.79,460.12 L530.16,460.14 L530.53,460.15 L530.90,460.17 L531.27,460.18 L531.64,460.19 L532.01,460.20 L532.38,460.20 L532.75,460.21 L533.12,460.21 L533.50,460.21 L533.87,460.21 L534.24,460.21 L534.61,460.20 L534.98,460.20 L535.35,460.20 L535.72,460.19 L536.09,460.19 L536.46,460.19 L536.84,460.18 L537.21,460.18 L537.58,460.18 L537.95,460.18 L538.32,460.18 L538.69,460.18 L539.06,460.18 L539.43,460.19 L539.80,460.19 L540.18,460.20 L540.55,460.21 L540.55,462.20 Z" fill="#31688e"/><path d="M355.38,458.12 L355.75,458.05 L356.12,457.97 L356.49,457.90 L356.86,457.83 L357.23,457.77 L357.60,457.70 L357.97,457.64 L358.34,457.58 L358.71,457.53 L359.09,457.48 L359.46,457.43 L359.83,457.38 L360.20,457.34 L360.57,457.30 L360.94,457.26 L361.31,457.22 L361.68,457.19 L362.05,457.16 L362.43,457.13 L362.80,457.11 L363.17,457.08 L363.54,457.06 L363.91,457.04 L364.28,457.03 L364.65,457.02 L365.02,457.00 L365.39,457.00 L365.77,456.99 L366.14,456.99 L366.51,456.98 L366.88,456.98 L367.25,456.99 L367.62,456.99 L367.99,457.00 L368.36,457.00 L368.73,457.01 L369.11,457.03 L369.48,457.04 L369.85,457.06 L370.22,457.08 L370.59,457.10 L370.96,457.12 L371.33,457.14 L371.70,457.17 L372.07,457.19 L372.45,457.22 L372.82,457.25 L373.19,457.28 L373.56,457.31 L373.93,457.35 L374.30,457.38 L374.67,457.42 L375.04,457.45 L375.41,457.49 L375.78,457.52 L376.16,457.56 L376.53,457.60 L376.90,457.63 L377.27,457.67 L377.64,457.70 L378.01,457.73 L378.38,457.76 L378.75,457.78 L379.12,457.81 L379.50,457.83 L379.87,457.85 L380.24,457.86 L380.61,457.87 L380.98,457.87 L381.35,457.87 L381.72,457.86 L382.09,457.85 L382.46,457.83 L382.84,457.80 L383.21,457.76 L383.58,457.72 L383.95,457.67 L384.32,457.61 L384.69,457.54 L385.06,457.46 L385.43,457.37 L385.80,457.27 L386.18,457.16 L386.55,457.04 L386.92,456.91 L387.29,456.76 L387.66,456.61 L388.03,456.44 L388.40,456.26 L388.77,456.07 L389.14,455.87 L389.51,455.65 L389.89,455.42 L390.26,455.18 L390.63,454.93 L391.00,454.67 L391.37,454.40 L391.74,454.11 L392.11,453.81 L392.48,453.50 L392.85,453.18 L393.23,452.85 L393.60,452.52 L393.97,452.17 L394.34,451.81 L394.71,451.44 L395.08,451.07 L395.45,450.68 L395.82,450.29 L396.19,449.90 L396.57,449.49 L396.94,449.09 L397.31,448.67 L397.68,448.25 L398.05,447.83 L398.42,447.40 L398.79,446.97 L399.16,446.54 L399.53,446.11 L399.91,445.67 L400.28,445.23 L400.65,444.79 L401.02,444.36 L401.39,443.92 L401.76,443.48 L402.13,443.04 L402.50,442.60 L402.87,442.17 L403.25,441.74 L403.62,441.30 L403.99,440.88 L404.36,440.45 L404.73,440.02 L405.10,439.60 L405.47,439.19 L405.84,438.77 L406.21,438.36 L406.58,437.95 L406.96,437.54 L407.33,437.14 L407.70,436.74 L408.07,436.35 L408.44,435.95 L408.81,435.56 L409.18,435.18 L409.55,434.80 L409.92,434.42 L410.30,434.05 L410.67,433.68 L411.04,433.31 L411.41,432.95 L411.78,432.60 L412.15,432.24 L412.52,431.90 L412.89,431.55 L413.26,431.22 L413.64,430.88 L414.01,430.56 L414.38,430.23 L414.75,429.92 L415.12,429.61 L415.49,429.31 L415.86,429.01 L416.23,428.73 L416.60,428.45 L416.98,428.18 L417.35,427.91 L417.72,427.66 L418.09,427.42 L418.46,427.18 L418.83,426.96 L419.20,426.75 L419.57,426.55 L419.94,426.36 L420.32,426.19 L420.69,426.02 L421.06,425.87 L421.43,425.74 L421.80,425.62 L422.17,425.51 L422.54,425.42 L422.91,425.34 L423.28,425.28 L423.65,425.24 L424.03,425.21 L424.40,425.20 L424.77,425.21 L425.14,425.23 L425.51,425.27 L425.88,425.33 L426.25,425.41 L426.62,425.50 L426.99,425.61 L427.37,425.75 L427.74,425.89 L428.11,426.06 L428.48,426.24 L428.85,426.44 L429.22,426.66 L429.59,426.90 L429.96,427.15 L430.33,427.42 L430.71,427.70 L431.08,428.00 L431.45,428.31 L431.82,428.64 L432.19,428.98 L432.56,429.33 L432.93,429.69 L433.30,430.07 L433.67,430.45 L434.05,430.84 L434.42,431.25 L434.79,431.65 L435.16,432.07 L435.53,432.49 L435.90,432.91 L436.27,433.34 L436.64,433.77 L437.01,434.19 L437.38,434.62 L437.76,435.05 L438.13,435.47 L438.50,435.89 L438.87,436.30 L439.24,436.71 L439.61,437.11 L439.98,437.51 L440.35,437.89 L440.72,438.26 L441.10,438.62 L441.47,438.97 L441.84,439.31 L442.21,439.64 L442.58,439.95 L442.95,440.24 L443.32,440.52 L443.69,440.79 L444.06,441.04 L444.44,441.27 L444.81,441.49 L445.18,441.69 L445.55,441.88 L445.92,442.05 L446.29,442.20 L446.66,442.34 L447.03,442.46 L447.40,442.56 L447.78,442.65 L448.15,442.73 L448.52,442.79 L448.89,442.84 L449.26,442.88 L449.63,442.90 L450.00,442.91 L450.37,442.91 L450.74,442.90 L451.12,442.88 L451.49,442.85 L451.86,442.81 L452.23,442.77 L452.60,442.72 L452.97,442.66 L453.34,442.59 L453.71,442.52 L454.08,442.45 L454.45,442.37 L454.83,442.29 L455.20,442.20 L455.57,442.11 L455.94,442.02 L456.31,441.93 L456.68,441.84 L457.05,441.75 L457.42,441.65 L457.79,441.56 L458.17,441.46 L458.54,441.36 L458.91,441.27 L459.28,441.17 L459.65,441.08 L460.02,440.98 L460.39,440.89 L460.76,440.80 L461.13,440.71 L461.51,440.61 L461.88,440.52 L462.25,440.44 L462.62,440.35 L462.99,440.26 L463.36,440.18 L463.73,440.09 L464.10,440.01 L464.47,439.93 L464.85,439.85 L465.22,439.78 L465.59,439.71 L465.96,439.64 L466.33,439.57 L466.70,439.51 L467.07,439.45 L467.44,439.40 L467.81,439.35 L468.18,439.30 L468.56,439.26 L468.93,439.23 L469.30,439.20 L469.67,439.18 L470.04,439.17 L470.41,439.16 L470.78,439.16 L471.15,439.17 L471.52,439.19 L471.90,439.21 L472.27,439.25 L472.64,439.29 L473.01,439.34 L473.38,439.40 L473.75,439.48 L474.12,439.56 L474.49,439.65 L474.86,439.75 L475.24,439.86 L475.61,439.98 L475.98,440.11 L476.35,440.26 L476.72,440.41 L477.09,440.57 L477.46,440.74 L477.83,440.91 L478.20,441.10 L478.58,441.30 L478.95,441.50 L479.32,441.71 L479.69,441.94 L480.06,442.16 L480.43,442.40 L480.80,442.64 L481.17,442.89 L481.54,443.14 L481.92,443.40 L482.29,443.66 L482.66,443.93 L483.03,444.21 L483.40,444.48 L483.77,444.76 L484.14,445.05 L484.51,445.33 L484.88,445.62 L485.25,445.92 L485.63,446.21 L486.00,446.50 L486.37,446.80 L486.74,447.09 L487.11,447.39 L487.48,447.69 L487.85,447.98 L488.22,448.28 L488.59,448.57 L488.97,448.87 L489.34,449.16 L489.71,449.45 L490.08,449.74 L490.45,450.03 L490.82,450.32 L491.19,450.60 L491.56,450.88 L491.93,451.15 L492.31,451.43 L492.68,451.70 L493.05,451.96 L493.42,452.22 L493.79,452.48 L494.16,452.73 L494.53,452.98 L494.90,453.23 L495.27,453.46 L495.65,453.70 L496.02,453.92 L496.39,454.14 L496.76,454.36 L497.13,454.57 L497.50,454.77 L497.87,454.96 L498.24,455.15 L498.61,455.34 L498.99,455.51 L499.36,455.68 L499.73,455.84 L500.10,455.99 L500.47,456.14 L500.84,456.28 L501.21,456.41 L501.58,456.53 L501.95,456.65 L502.32,456.76 L502.70,456.87 L503.07,456.96 L503.44,457.05 L503.81,457.14 L504.18,457.21 L504.55,457.28 L504.92,457.35 L505.29,457.41 L505.66,457.46 L506.04,457.51 L506.41,457.56 L506.78,457.60 L507.15,457.64 L507.52,457.67 L507.89,457.70 L508.26,457.73 L508.63,457.75 L509.00,457.78 L509.38,457.80 L509.75,457.82 L510.12,457.84 L510.49,457.85 L510.86,457.87 L511.23,457.89 L511.60,457.91 L511.97,457.93 L512.34,457.95 L512.72,457.97 L513.09,457.99 L513.46,458.02 L513.83,458.04 L514.20,458.07 L514.57,458.10 L514.94,458.13 L515.31,458.17 L515.68,458.20 L516.05,458.24 L516.43,458.29 L516.80,458.33 L517.17,458.38 L517.54,458.43 L517.91,458.48 L518.28,458.53 L518.65,458.59 L519.02,458.64 L519.39,458.70 L519.77,458.76 L520.14,458.82 L520.51,458.88 L520.88,458.95 L521.25,459.01 L521.62,459.07 L521.99,459.14 L522.36,459.20 L522.73,459.26 L523.11,459.33 L523.48,459.39 L523.85,459.45 L524.22,459.51 L524.59,459.56 L524.96,459.62 L525.33,459.67 L525.70,459.72 L526.07,459.77 L526.45,459.82 L526.82,459.86 L527.19,459.91 L527.56,459.94 L527.93,459.98 L528.30,460.01 L528.67,460.04 L529.04,460.07 L529.41,460.10 L529.79,460.12 L530.16,460.14 L530.53,460.15 L530.90,460.17 L531.27,460.18 L531.64,460.19 L532.01,460.20 L532.38,460.20 L532.75,460.21 L533.12,460.21 L533.50,460.21 L533.87,460.21 L534.24,460.21 L534.61,460.20 L534.98,460.20 L535.35,460.20 L535.72,460.19 L536.09,460.19 L536.46,460.19 L536.84,460.18 L537.21,460.18 L537.58,460.18 L537.95,460.18 L538.32,460.18 L538.69,460.18 L539.06,460.18 L539.43,460.19 L539.80,460.19 L540.18,460.20 L540.55,460.21" fill="none" stroke="#0a0a0a" stroke-width="1.25" stroke-linejoin="round"/><path d="M384.68,480.55 L384.68,467.75 L384.98,467.42 L385.29,467.08 L385.60,466.74 L385.90,466.40 L386.21,466.06 L386.52,465.71 L386.82,465.36 L387.13,465.01 L387.44,464.65 L387.74,464.30 L388.05,463.94 L388.36,463.58 L388.67,463.22 L388.97,462.87 L389.28,462.51 L389.59,462.15 L389.89,461.80 L390.20,461.44 L390.51,461.09 L390.81,460.74 L391.12,460.39 L391.43,460.05 L391.73,459.71 L392.04,459.38 L392.35,459.05 L392.66,458.73 L392.96,458.42 L393.27,458.11 L393.58,457.81 L393.88,457.52 L394.19,457.24 L394.50,456.96 L394.80,456.70 L395.11,456.45 L395.42,456.21 L395.72,455.98 L396.03,455.77 L396.34,455.56 L396.65,455.37 L396.95,455.19 L397.26,455.03 L397.57,454.88 L397.87,454.75 L398.18,454.63 L398.49,454.52 L398.79,454.43 L399.10,454.36 L399.41,454.30 L399.71,454.25 L400.02,454.22 L400.33,454.20 L400.64,454.20 L400.94,454.21 L401.25,454.24 L401.56,454.28 L401.86,454.33 L402.17,454.39 L402.48,454.47 L402.78,454.55 L403.09,454.65 L403.40,454.76 L403.70,454.87 L404.01,455.00 L404.32,455.13 L404.63,455.27 L404.93,455.41 L405.24,455.56 L405.55,455.71 L405.85,455.87 L406.16,456.03 L406.47,456.19 L406.77,456.35 L407.08,456.50 L407.39,456.66 L407.70,456.81 L408.00,456.96 L408.31,457.11 L408.62,457.25 L408.92,457.39 L409.23,457.51 L409.54,457.63 L409.84,457.74 L410.15,457.85 L410.46,457.94 L410.76,458.02 L411.07,458.09 L411.38,458.15 L411.69,458.20 L411.99,458.24 L412.30,458.26 L412.61,458.28 L412.91,458.28 L413.22,458.27 L413.53,458.24 L413.83,458.20 L414.14,458.15 L414.45,458.09 L414.75,458.02 L415.06,457.93 L415.37,457.84 L415.68,457.73 L415.98,457.61 L416.29,457.49 L416.60,457.35 L416.90,457.20 L417.21,457.05 L417.52,456.89 L417.82,456.73 L418.13,456.56 L418.44,456.38 L418.74,456.20 L419.05,456.02 L419.36,455.83 L419.67,455.65 L419.97,455.46 L420.28,455.27 L420.59,455.09 L420.89,454.91 L421.20,454.73 L421.51,454.55 L421.81,454.38 L422.12,454.22 L422.43,454.06 L422.73,453.91 L423.04,453.77 L423.35,453.64 L423.66,453.51 L423.96,453.40 L424.27,453.30 L424.58,453.21 L424.88,453.13 L425.19,453.06 L425.50,453.00 L425.80,452.96 L426.11,452.94 L426.42,452.92 L426.72,452.92 L427.03,452.94 L427.34,452.97 L427.65,453.01 L427.95,453.07 L428.26,453.14 L428.57,453.23 L428.87,453.33 L429.18,453.44 L429.49,453.57 L429.79,453.72 L430.10,453.87 L430.41,454.04 L430.72,454.22 L431.02,454.42 L431.33,454.62 L431.64,454.84 L431.94,455.07 L432.25,455.30 L432.56,455.55 L432.86,455.81 L433.17,456.07 L433.48,456.34 L433.78,456.62 L434.09,456.91 L434.40,457.20 L434.71,457.49 L435.01,457.79 L435.32,458.09 L435.63,458.39 L435.93,458.70 L436.24,459.00 L436.55,459.31 L436.85,459.61 L437.16,459.92 L437.47,460.22 L437.77,460.52 L438.08,460.81 L438.39,461.10 L438.70,461.38 L439.00,461.66 L439.31,461.94 L439.62,462.20 L439.92,462.46 L440.23,462.71 L440.54,462.95 L440.84,463.18 L441.15,463.40 L441.46,463.61 L441.76,463.81 L442.07,464.00 L442.38,464.18 L442.69,464.35 L442.99,464.51 L443.30,464.65 L443.61,464.78 L443.91,464.90 L444.22,465.01 L444.53,465.10 L444.83,465.19 L445.14,465.26 L445.45,465.32 L445.75,465.36 L446.06,465.40 L446.37,465.42 L446.68,465.43 L446.98,465.43 L447.29,465.42 L447.60,465.39 L447.90,465.36 L448.21,465.32 L448.52,465.26 L448.82,465.20 L449.13,465.13 L449.44,465.04 L449.75,464.96 L450.05,464.86 L450.36,464.75 L450.67,464.64 L450.97,464.52 L451.28,464.40 L451.59,464.27 L451.89,464.13 L452.20,463.99 L452.51,463.85 L452.81,463.70 L453.12,463.54 L453.43,463.39 L453.74,463.23 L454.04,463.07 L454.35,462.91 L454.66,462.75 L454.96,462.59 L455.27,462.42 L455.58,462.26 L455.88,462.10 L456.19,461.93 L456.50,461.77 L456.80,461.61 L457.11,461.46 L457.42,461.30 L457.73,461.15 L458.03,461.00 L458.34,460.85 L458.65,460.70 L458.95,460.56 L459.26,460.42 L459.57,460.29 L459.87,460.16 L460.18,460.04 L460.49,459.92 L460.79,459.80 L461.10,459.69 L461.41,459.59 L461.72,459.49 L462.02,459.40 L462.33,459.31 L462.64,459.23 L462.94,459.16 L463.25,459.09 L463.56,459.03 L463.86,458.97 L464.17,458.93 L464.48,458.88 L464.78,458.85 L465.09,458.83 L465.40,458.81 L465.71,458.80 L466.01,458.80 L466.32,458.80 L466.63,458.81 L466.93,458.84 L467.24,458.87 L467.55,458.91 L467.85,458.95 L468.16,459.01 L468.47,459.07 L468.77,459.14 L469.08,459.22 L469.39,459.31 L469.70,459.41 L470.00,459.52 L470.31,459.63 L470.62,459.75 L470.92,459.88 L471.23,460.02 L471.54,460.17 L471.84,460.32 L472.15,460.48 L472.46,460.65 L472.77,460.83 L473.07,461.01 L473.38,461.20 L473.69,461.40 L473.99,461.60 L474.30,461.80 L474.61,462.01 L474.91,462.23 L475.22,462.45 L475.53,462.67 L475.83,462.90 L476.14,463.12 L476.45,463.36 L476.76,463.59 L477.06,463.82 L477.37,464.06 L477.68,464.29 L477.98,464.52 L478.29,464.76 L478.60,464.99 L478.90,465.21 L479.21,465.44 L479.52,465.66 L479.82,465.88 L480.13,466.09 L480.44,466.30 L480.75,466.50 L481.05,466.70 L481.36,466.89 L481.67,467.07 L481.97,467.25 L482.28,467.42 L482.59,467.58 L482.89,467.73 L483.20,467.88 L483.51,468.01 L483.81,468.14 L484.12,468.25 L484.43,468.36 L484.74,468.46 L485.04,468.54 L485.35,468.62 L485.66,468.69 L485.96,468.75 L486.27,468.80 L486.58,468.84 L486.88,468.87 L487.19,468.89 L487.50,468.90 L487.80,468.91 L488.11,468.90 L488.42,468.89 L488.73,468.88 L489.03,468.85 L489.34,468.82 L489.65,468.79 L489.95,468.74 L490.26,468.70 L490.57,468.65 L490.87,468.60 L491.18,468.54 L491.49,468.48 L491.80,468.42 L492.10,468.36 L492.41,468.30 L492.72,468.24 L493.02,468.19 L493.33,468.13 L493.64,468.07 L493.94,468.02 L494.25,467.98 L494.56,467.93 L494.86,467.89 L495.17,467.86 L495.48,467.83 L495.79,467.81 L496.09,467.79 L496.40,467.79 L496.71,467.79 L497.01,467.79 L497.32,467.81 L497.63,467.83 L497.93,467.87 L498.24,467.91 L498.55,467.96 L498.85,468.02 L499.16,468.09 L499.47,468.17 L499.78,468.25 L500.08,468.35 L500.39,468.46 L500.70,468.57 L501.00,468.69 L501.31,468.82 L501.62,468.97 L501.92,469.11 L502.23,469.27 L502.54,469.43 L502.84,469.60 L503.15,469.78 L503.46,469.96 L503.77,470.15 L504.07,470.35 L504.38,470.55 L504.69,470.75 L504.99,470.96 L505.30,471.17 L505.61,471.38 L505.91,471.60 L506.22,471.81 L506.53,472.03 L506.83,472.25 L507.14,472.47 L507.45,472.69 L507.76,472.91 L508.06,473.12 L508.37,473.34 L508.68,473.55 L508.98,473.76 L509.29,473.96 L509.60,474.16 L509.90,474.36 L510.21,474.55 L510.52,474.74 L510.82,474.92 L511.13,475.09 L511.44,475.26 L511.75,475.42 L512.05,475.57 L512.36,475.72 L512.67,475.86 L512.97,475.98 L513.28,476.11 L513.59,476.22 L513.89,476.32 L514.20,476.41 L514.51,476.50 L514.82,476.57 L515.12,476.64 L515.43,476.69 L515.74,476.74 L516.04,476.77 L516.35,476.80 L516.66,476.82 L516.96,476.82 L517.27,476.82 L517.58,476.80 L517.88,476.78 L518.19,476.74 L518.50,476.70 L518.81,476.64 L519.11,476.58 L519.42,476.50 L519.73,476.42 L520.03,476.33 L520.34,476.22 L520.65,476.11 L520.95,475.99 L521.26,475.87 L521.57,475.73 L521.87,475.59 L522.18,475.44 L522.49,475.28 L522.80,475.11 L523.10,474.94 L523.41,474.77 L523.72,474.58 L524.02,474.39 L524.33,474.20 L524.64,474.00 L524.94,473.80 L525.25,473.60 L525.56,473.39 L525.86,473.18 L526.17,472.97 L526.48,472.76 L526.79,472.55 L527.09,472.33 L527.40,472.12 L527.71,471.91 L528.01,471.70 L528.32,471.49 L528.63,471.29 L528.93,471.09 L529.24,470.89 L529.55,470.70 L529.85,470.51 L530.16,470.33 L530.47,470.15 L530.78,469.98 L531.08,469.82 L531.39,469.66 L531.70,469.52 L532.00,469.38 L532.31,469.25 L532.62,469.13 L532.92,469.02 L533.23,468.92 L533.54,468.83 L533.85,468.75 L534.15,468.68 L534.46,468.63 L534.77,468.58 L535.07,468.55 L535.38,468.52 L535.69,468.51 L535.99,468.51 L536.30,468.53 L536.61,468.55 L536.91,468.59 L537.22,468.63 L537.53,468.69 L537.84,468.76 L537.84,480.55 Z" fill="#440154"/><path d="M384.68,467.75 L384.98,467.42 L385.29,467.08 L385.60,466.74 L385.90,466.40 L386.21,466.06 L386.52,465.71 L386.82,465.36 L387.13,465.01 L387.44,464.65 L387.74,464.30 L388.05,463.94 L388.36,463.58 L388.67,463.22 L388.97,462.87 L389.28,462.51 L389.59,462.15 L389.89,461.80 L390.20,461.44 L390.51,461.09 L390.81,460.74 L391.12,460.39 L391.43,460.05 L391.73,459.71 L392.04,459.38 L392.35,459.05 L392.66,458.73 L392.96,458.42 L393.27,458.11 L393.58,457.81 L393.88,457.52 L394.19,457.24 L394.50,456.96 L394.80,456.70 L395.11,456.45 L395.42,456.21 L395.72,455.98 L396.03,455.77 L396.34,455.56 L396.65,455.37 L396.95,455.19 L397.26,455.03 L397.57,454.88 L397.87,454.75 L398.18,454.63 L398.49,454.52 L398.79,454.43 L399.10,454.36 L399.41,454.30 L399.71,454.25 L400.02,454.22 L400.33,454.20 L400.64,454.20 L400.94,454.21 L401.25,454.24 L401.56,454.28 L401.86,454.33 L402.17,454.39 L402.48,454.47 L402.78,454.55 L403.09,454.65 L403.40,454.76 L403.70,454.87 L404.01,455.00 L404.32,455.13 L404.63,455.27 L404.93,455.41 L405.24,455.56 L405.55,455.71 L405.85,455.87 L406.16,456.03 L406.47,456.19 L406.77,456.35 L407.08,456.50 L407.39,456.66 L407.70,456.81 L408.00,456.96 L408.31,457.11 L408.62,457.25 L408.92,457.39 L409.23,457.51 L409.54,457.63 L409.84,457.74 L410.15,457.85 L410.46,457.94 L410.76,458.02 L411.07,458.09 L411.38,458.15 L411.69,458.20 L411.99,458.24 L412.30,458.26 L412.61,458.28 L412.91,458.28 L413.22,458.27 L413.53,458.24 L413.83,458.20 L414.14,458.15 L414.45,458.09 L414.75,458.02 L415.06,457.93 L415.37,457.84 L415.68,457.73 L415.98,457.61 L416.29,457.49 L416.60,457.35 L416.90,457.20 L417.21,457.05 L417.52,456.89 L417.82,456.73 L418.13,456.56 L418.44,456.38 L418.74,456.20 L419.05,456.02 L419.36,455.83 L419.67,455.65 L419.97,455.46 L420.28,455.27 L420.59,455.09 L420.89,454.91 L421.20,454.73 L421.51,454.55 L421.81,454.38 L422.12,454.22 L422.43,454.06 L422.73,453.91 L423.04,453.77 L423.35,453.64 L423.66,453.51 L423.96,453.40 L424.27,453.30 L424.58,453.21 L424.88,453.13 L425.19,453.06 L425.50,453.00 L425.80,452.96 L426.11,452.94 L426.42,452.92 L426.72,452.92 L427.03,452.94 L427.34,452.97 L427.65,453.01 L427.95,453.07 L428.26,453.14 L428.57,453.23 L428.87,453.33 L429.18,453.44 L429.49,453.57 L429.79,453.72 L430.10,453.87 L430.41,454.04 L430.72,454.22 L431.02,454.42 L431.33,454.62 L431.64,454.84 L431.94,455.07 L432.25,455.30 L432.56,455.55 L432.86,455.81 L433.17,456.07 L433.48,456.34 L433.78,456.62 L434.09,456.91 L434.40,457.20 L434.71,457.49 L435.01,457.79 L435.32,458.09 L435.63,458.39 L435.93,458.70 L436.24,459.00 L436.55,459.31 L436.85,459.61 L437.16,459.92 L437.47,460.22 L437.77,460.52 L438.08,460.81 L438.39,461.10 L438.70,461.38 L439.00,461.66 L439.31,461.94 L439.62,462.20 L439.92,462.46 L440.23,462.71 L440.54,462.95 L440.84,463.18 L441.15,463.40 L441.46,463.61 L441.76,463.81 L442.07,464.00 L442.38,464.18 L442.69,464.35 L442.99,464.51 L443.30,464.65 L443.61,464.78 L443.91,464.90 L444.22,465.01 L444.53,465.10 L444.83,465.19 L445.14,465.26 L445.45,465.32 L445.75,465.36 L446.06,465.40 L446.37,465.42 L446.68,465.43 L446.98,465.43 L447.29,465.42 L447.60,465.39 L447.90,465.36 L448.21,465.32 L448.52,465.26 L448.82,465.20 L449.13,465.13 L449.44,465.04 L449.75,464.96 L450.05,464.86 L450.36,464.75 L450.67,464.64 L450.97,464.52 L451.28,464.40 L451.59,464.27 L451.89,464.13 L452.20,463.99 L452.51,463.85 L452.81,463.70 L453.12,463.54 L453.43,463.39 L453.74,463.23 L454.04,463.07 L454.35,462.91 L454.66,462.75 L454.96,462.59 L455.27,462.42 L455.58,462.26 L455.88,462.10 L456.19,461.93 L456.50,461.77 L456.80,461.61 L457.11,461.46 L457.42,461.30 L457.73,461.15 L458.03,461.00 L458.34,460.85 L458.65,460.70 L458.95,460.56 L459.26,460.42 L459.57,460.29 L459.87,460.16 L460.18,460.04 L460.49,459.92 L460.79,459.80 L461.10,459.69 L461.41,459.59 L461.72,459.49 L462.02,459.40 L462.33,459.31 L462.64,459.23 L462.94,459.16 L463.25,459.09 L463.56,459.03 L463.86,458.97 L464.17,458.93 L464.48,458.88 L464.78,458.85 L465.09,458.83 L465.40,458.81 L465.71,458.80 L466.01,458.80 L466.32,458.80 L466.63,458.81 L466.93,458.84 L467.24,458.87 L467.55,458.91 L467.85,458.95 L468.16,459.01 L468.47,459.07 L468.77,459.14 L469.08,459.22 L469.39,459.31 L469.70,459.41 L470.00,459.52 L470.31,459.63 L470.62,459.75 L470.92,459.88 L471.23,460.02 L471.54,460.17 L471.84,460.32 L472.15,460.48 L472.46,460.65 L472.77,460.83 L473.07,461.01 L473.38,461.20 L473.69,461.40 L473.99,461.60 L474.30,461.80 L474.61,462.01 L474.91,462.23 L475.22,462.45 L475.53,462.67 L475.83,462.90 L476.14,463.12 L476.45,463.36 L476.76,463.59 L477.06,463.82 L477.37,464.06 L477.68,464.29 L477.98,464.52 L478.29,464.76 L478.60,464.99 L478.90,465.21 L479.21,465.44 L479.52,465.66 L479.82,465.88 L480.13,466.09 L480.44,466.30 L480.75,466.50 L481.05,466.70 L481.36,466.89 L481.67,467.07 L481.97,467.25 L482.28,467.42 L482.59,467.58 L482.89,467.73 L483.20,467.88 L483.51,468.01 L483.81,468.14 L484.12,468.25 L484.43,468.36 L484.74,468.46 L485.04,468.54 L485.35,468.62 L485.66,468.69 L485.96,468.75 L486.27,468.80 L486.58,468.84 L486.88,468.87 L487.19,468.89 L487.50,468.90 L487.80,468.91 L488.11,468.90 L488.42,468.89 L488.73,468.88 L489.03,468.85 L489.34,468.82 L489.65,468.79 L489.95,468.74 L490.26,468.70 L490.57,468.65 L490.87,468.60 L491.18,468.54 L491.49,468.48 L491.80,468.42 L492.10,468.36 L492.41,468.30 L492.72,468.24 L493.02,468.19 L493.33,468.13 L493.64,468.07 L493.94,468.02 L494.25,467.98 L494.56,467.93 L494.86,467.89 L495.17,467.86 L495.48,467.83 L495.79,467.81 L496.09,467.79 L496.40,467.79 L496.71,467.79 L497.01,467.79 L497.32,467.81 L497.63,467.83 L497.93,467.87 L498.24,467.91 L498.55,467.96 L498.85,468.02 L499.16,468.09 L499.47,468.17 L499.78,468.25 L500.08,468.35 L500.39,468.46 L500.70,468.57 L501.00,468.69 L501.31,468.82 L501.62,468.97 L501.92,469.11 L502.23,469.27 L502.54,469.43 L502.84,469.60 L503.15,469.78 L503.46,469.96 L503.77,470.15 L504.07,470.35 L504.38,470.55 L504.69,470.75 L504.99,470.96 L505.30,471.17 L505.61,471.38 L505.91,471.60 L506.22,471.81 L506.53,472.03 L506.83,472.25 L507.14,472.47 L507.45,472.69 L507.76,472.91 L508.06,473.12 L508.37,473.34 L508.68,473.55 L508.98,473.76 L509.29,473.96 L509.60,474.16 L509.90,474.36 L510.21,474.55 L510.52,474.74 L510.82,474.92 L511.13,475.09 L511.44,475.26 L511.75,475.42 L512.05,475.57 L512.36,475.72 L512.67,475.86 L512.97,475.98 L513.28,476.11 L513.59,476.22 L513.89,476.32 L514.20,476.41 L514.51,476.50 L514.82,476.57 L515.12,476.64 L515.43,476.69 L515.74,476.74 L516.04,476.77 L516.35,476.80 L516.66,476.82 L516.96,476.82 L517.27,476.82 L517.58,476.80 L517.88,476.78 L518.19,476.74 L518.50,476.70 L518.81,476.64 L519.11,476.58 L519.42,476.50 L519.73,476.42 L520.03,476.33 L520.34,476.22 L520.65,476.11 L520.95,475.99 L521.26,475.87 L521.57,475.73 L521.87,475.59 L522.18,475.44 L522.49,475.28 L522.80,475.11 L523.10,474.94 L523.41,474.77 L523.72,474.58 L524.02,474.39 L524.33,474.20 L524.64,474.00 L524.94,473.80 L525.25,473.60 L525.56,473.39 L525.86,473.18 L526.17,472.97 L526.48,472.76 L526.79,472.55 L527.09,472.33 L527.40,472.12 L527.71,471.91 L528.01,471.70 L528.32,471.49 L528.63,471.29 L528.93,471.09 L529.24,470.89 L529.55,470.70 L529.85,470.51 L530.16,470.33 L530.47,470.15 L530.78,469.98 L531.08,469.82 L531.39,469.66 L531.70,469.52 L532.00,469.38 L532.31,469.25 L532.62,469.13 L532.92,469.02 L533.23,468.92 L533.54,468.83 L533.85,468.75 L534.15,468.68 L534.46,468.63 L534.77,468.58 L535.07,468.55 L535.38,468.52 L535.69,468.51 L535.99,468.51 L536.30,468.53 L536.61,468.55 L536.91,468.59 L537.22,468.63 L537.53,468.69 L537.84,468.76" fill="none" stroke="#0a0a0a" stroke-width="1.25" stroke-linejoin="round"/><rect x="565.80" y="380.3" width="19" height="3.6" fill="#fde725" stroke="#222" stroke-width="0.6"/><text x="588.30" y="384.8" font-size="7.4" fill="#2a3f5f">Sun</text><rect x="607.10" y="380.3" width="19" height="3.6" fill="#35b779" stroke="#222" stroke-width="0.6"/><text x="628.60" y="384.8" font-size="7.4" fill="#2a3f5f">Sat</text><rect x="644.90" y="380.3" width="19" height="3.6" fill="#31688e" stroke="#222" stroke-width="0.6"/><text x="666.90" y="384.8" font-size="7.4" fill="#2a3f5f">Thur</text><rect x="688.80" y="380.3" width="19" height="3.6" fill="#440154" stroke="#222" stroke-width="0.6"/><text x="710.80" y="384.8" font-size="7.4" fill="#2a3f5f">Fri</text></svg>
</body></html>
